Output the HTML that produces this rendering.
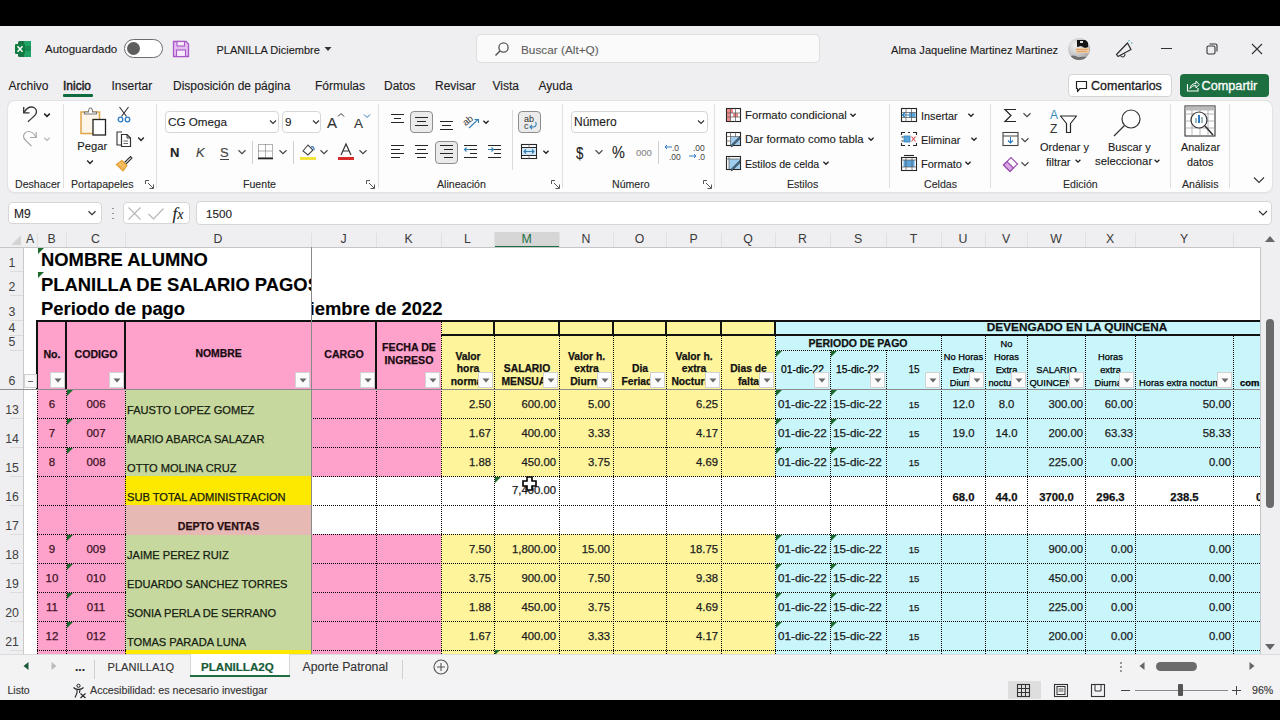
<!DOCTYPE html>
<html><head><meta charset="utf-8"><title>Excel</title>
<style>
html,body{margin:0;padding:0;width:1280px;height:720px;overflow:hidden;background:#efeef1;}
body{position:relative;font-family:"Liberation Sans",sans-serif;}
div,svg{position:absolute;box-sizing:border-box;}
.t{white-space:nowrap;-webkit-text-stroke:0.12px currentColor;}
.g{-webkit-text-stroke:0.25px currentColor;}
svg{overflow:visible;}
</style></head><body>
<div style="left:0px;top:0px;width:1280px;height:720px;background:#efeef1;"></div>
<div style="left:0px;top:0px;width:1280px;height:26px;background:#000;"></div>
<div style="left:0px;top:700px;width:1280px;height:20px;background:#000;"></div>
<svg style="left:14px;top:40px;" width="18" height="18" viewBox="0 0 18 18"><rect x="4" y="1" width="13" height="16" rx="1.5" fill="#1a7343"/><rect x="10" y="1" width="7" height="16" fill="#21a366"/><rect x="4" y="6" width="13" height="5" fill="#107c41" opacity=".6"/><rect x="1" y="4" width="10" height="10" rx="1" fill="#107c41"/><path d="M3.5 6.2 L8.5 11.8 M8.5 6.2 L3.5 11.8" stroke="#fff" stroke-width="1.5"/></svg>
<div class="t " style="left:45px;top:44.27px;font-size:11.5px;line-height:11.5px;color:#1b1b1b;">Autoguardado</div>
<div style="left:124px;top:39px;width:39px;height:19px;background:#fff;border:1.3px solid #6b6b6b;border-radius:10px;box-sizing:border-box;"></div>
<div style="left:127px;top:42px;width:13px;height:13px;background:#5e5e5e;border-radius:50%;"></div>
<svg style="left:172px;top:40px;" width="18" height="18" viewBox="0 0 18 18"><path d="M1.5 1.5 H14 L16.5 4 V16.5 H1.5 Z" fill="#e3bdf0" stroke="#a957c9" stroke-width="1.3"/><rect x="5" y="1.5" width="7.5" height="4.5" fill="#f7ecfb" stroke="#a957c9" stroke-width="1.1"/><rect x="4.5" y="10" width="9" height="6.5" fill="#f7ecfb" stroke="#a957c9" stroke-width="1.1"/></svg>
<div class="t " style="left:216.5px;top:44.69px;font-size:11.0px;line-height:11.0px;color:#1b1b1b;">PLANILLA Diciembre</div>
<svg style="left:324px;top:46px;" width="8" height="6" viewBox="0 0 8 6"><path d="M0.5 1 L4 5 L7.5 1 Z" fill="#333"/></svg>
<div style="left:476px;top:34px;width:344px;height:29px;background:#fafafa;border:1px solid #dedede;border-radius:5px;box-sizing:border-box;"></div>
<svg style="left:494px;top:41px;" width="16" height="16" viewBox="0 0 16 16"><circle cx="9.5" cy="6.5" r="4.6" fill="none" stroke="#555" stroke-width="1.3"/><path d="M6.2 9.8 L1.5 14.5" stroke="#555" stroke-width="1.5"/></svg>
<div class="t " style="left:521px;top:44.51px;font-size:11.8px;line-height:11.8px;color:#5f5f5f;">Buscar (Alt+Q)</div>
<div class="t " style="left:891px;top:44.60px;font-size:11.1px;line-height:11.1px;color:#1b1b1b;">Alma Jaqueline Martinez Martinez</div>
<svg style="left:1067px;top:37px;" width="24" height="24" viewBox="0 0 24 24"><defs><radialGradient id="avg" cx=".35" cy=".35" r=".8"><stop offset="0" stop-color="#f2f2f2"/><stop offset="1" stop-color="#9a9a9a"/></radialGradient><clipPath id="av"><circle cx="12" cy="12" r="11"/></clipPath></defs><g clip-path="url(#av)"><rect width="24" height="24" fill="url(#avg)"/><path d="M10 3 H21 V10 L18 11 L14 9 L10 10 Z" fill="#151515"/><rect x="13" y="4" width="3" height="2" fill="#ddd"/><rect x="9" y="11" width="13" height="5" fill="#f0c9a0"/><path d="M9 12.5 H21 M10 14.5 H20" stroke="#d99a60" stroke-width=".8"/><path d="M4 19 C7 17, 10 21, 14 20 C17 19, 20 21, 22 19 V24 H4 Z" fill="#6f6f6f"/></g></svg>
<svg style="left:1112px;top:38px;" width="22" height="22" viewBox="0 0 22 22"><path d="M4.5 16.5 L15.5 5 L19 11.5 L6 18.5 Z" fill="none" stroke="#2a2a2a" stroke-width="1.2" stroke-linejoin="round"/><path d="M8.5 17 A2.2 2.2 0 1 0 12.5 15.5" fill="none" stroke="#2a2a2a" stroke-width="1.1"/><path d="M16.5 3.5 L17.5 2 M19 5.5 L20.5 4.5" stroke="#5fb3b3" stroke-width="1.1"/></svg>
<div style="left:1161px;top:48px;width:11px;height:1px;background:#333;"></div>
<svg style="left:1205px;top:42px;" width="14" height="14" viewBox="0 0 14 14"><rect x="2" y="4" width="8" height="8" rx="1.5" fill="none" stroke="#333" stroke-width="1.1"/><path d="M4.5 2 H10.5 A1.5 1.5 0 0 1 12 3.5 V9.5" fill="none" stroke="#333" stroke-width="1.1"/></svg>
<svg style="left:1250px;top:42px;" width="14" height="14" viewBox="0 0 14 14"><path d="M2 2 L12 12 M12 2 L2 12" stroke="#333" stroke-width="1.1"/></svg>
<div class="t " style="left:8.5px;top:80.34px;font-size:12px;line-height:12px;color:#1b1b1b;">Archivo</div>
<div class="t " style="left:63px;top:80.34px;font-size:12px;line-height:12px;color:#1b1b1b;-webkit-text-stroke:0.45px #1b1b1b;">Inicio</div>
<div class="t " style="left:111.5px;top:80.34px;font-size:12px;line-height:12px;color:#1b1b1b;">Insertar</div>
<div class="t " style="left:173px;top:80.34px;font-size:12px;line-height:12px;color:#1b1b1b;">Disposición de página</div>
<div class="t " style="left:315px;top:80.34px;font-size:12px;line-height:12px;color:#1b1b1b;">Fórmulas</div>
<div class="t " style="left:384px;top:80.34px;font-size:12px;line-height:12px;color:#1b1b1b;">Datos</div>
<div class="t " style="left:435px;top:80.34px;font-size:12px;line-height:12px;color:#1b1b1b;">Revisar</div>
<div class="t " style="left:492.5px;top:80.34px;font-size:12px;line-height:12px;color:#1b1b1b;">Vista</div>
<div class="t " style="left:538.5px;top:80.34px;font-size:12px;line-height:12px;color:#1b1b1b;">Ayuda</div>
<div style="left:63px;top:94px;width:30px;height:2.5px;background:#0f6b3e;border-radius:1px;"></div>
<div style="left:1068px;top:74px;width:104px;height:23px;background:#fff;border:1px solid #d4d4d4;border-radius:4px;box-sizing:border-box;"></div>
<svg style="left:1075px;top:80px;" width="14" height="14" viewBox="0 0 14 14"><path d="M1.5 1.5 H11.5 V8.5 H5 L2.5 11.5 V8.5 H1.5 Z" fill="none" stroke="#222" stroke-width="1.2" stroke-linejoin="round"/></svg>
<div class="t " style="left:1091px;top:79.72px;font-size:12.5px;line-height:12.5px;color:#1b1b1b;-webkit-text-stroke:0.3px #1b1b1b;">Comentarios</div>
<div style="left:1180px;top:74px;width:89px;height:23px;background:#1d6f42;border-radius:4px;"></div>
<svg style="left:1186px;top:79px;" width="14" height="13" viewBox="0 0 14 13"><path d="M1.5 5 V12 H12 V9" fill="none" stroke="#fff" stroke-width="1.1"/><path d="M4 9.5 C4.5 6 7 4.5 10 4.5 V2 L13.2 5.5 L10 9 V6.5 C7.5 6.5 5.5 7.5 4 9.5 Z" fill="none" stroke="#fff" stroke-width="1"/></svg>
<div class="t " style="left:1201.5px;top:79.55px;font-size:12.7px;line-height:12.7px;color:#fff;-webkit-text-stroke:0.3px #fff;">Compartir</div>
<div style="left:8px;top:101px;width:1264px;height:91px;background:#fdfdfd;border-radius:7px;box-shadow:0 0 0 1px #e3e3e3, 0 1px 2px rgba(0,0,0,.12);"></div>
<div style="left:63px;top:104px;width:1px;height:84px;background:#e0e0e0;"></div>
<div style="left:156px;top:104px;width:1px;height:84px;background:#e0e0e0;"></div>
<div style="left:378px;top:104px;width:1px;height:84px;background:#e0e0e0;"></div>
<div style="left:562px;top:104px;width:1px;height:84px;background:#e0e0e0;"></div>
<div style="left:714px;top:104px;width:1px;height:84px;background:#e0e0e0;"></div>
<div style="left:889px;top:104px;width:1px;height:84px;background:#e0e0e0;"></div>
<div style="left:990px;top:104px;width:1px;height:84px;background:#e0e0e0;"></div>
<div style="left:1170px;top:104px;width:1px;height:84px;background:#e0e0e0;"></div>
<div style="left:1229px;top:104px;width:1px;height:84px;background:#e0e0e0;"></div>
<div class="t " style="left:15px;top:179.03px;font-size:10.6px;line-height:10.6px;color:#2a2a2a;">Deshacer</div>
<div class="t " style="left:71px;top:179.03px;font-size:10.6px;line-height:10.6px;color:#2a2a2a;">Portapapeles</div>
<div class="t " style="left:243px;top:179.03px;font-size:10.6px;line-height:10.6px;color:#2a2a2a;">Fuente</div>
<div class="t " style="left:437px;top:179.03px;font-size:10.6px;line-height:10.6px;color:#2a2a2a;">Alineación</div>
<div class="t " style="left:612px;top:179.03px;font-size:10.6px;line-height:10.6px;color:#2a2a2a;">Número</div>
<div class="t " style="left:787px;top:179.03px;font-size:10.6px;line-height:10.6px;color:#2a2a2a;">Estilos</div>
<div class="t " style="left:924px;top:179.03px;font-size:10.6px;line-height:10.6px;color:#2a2a2a;">Celdas</div>
<div class="t " style="left:1063px;top:179.03px;font-size:10.6px;line-height:10.6px;color:#2a2a2a;">Edición</div>
<div class="t " style="left:1182px;top:179.03px;font-size:10.6px;line-height:10.6px;color:#2a2a2a;">Análisis</div>
<svg style="left:145px;top:180px;" width="9" height="9" viewBox="0 0 9 9"><path d="M0.5 0.5 H4 M0.5 0.5 V4 M8.5 4.5 V8.5 H4.5 M3 3 L8 8" fill="none" stroke="#555" stroke-width="1"/></svg>
<svg style="left:366px;top:180px;" width="9" height="9" viewBox="0 0 9 9"><path d="M0.5 0.5 H4 M0.5 0.5 V4 M8.5 4.5 V8.5 H4.5 M3 3 L8 8" fill="none" stroke="#555" stroke-width="1"/></svg>
<svg style="left:551px;top:180px;" width="9" height="9" viewBox="0 0 9 9"><path d="M0.5 0.5 H4 M0.5 0.5 V4 M8.5 4.5 V8.5 H4.5 M3 3 L8 8" fill="none" stroke="#555" stroke-width="1"/></svg>
<svg style="left:703px;top:180px;" width="9" height="9" viewBox="0 0 9 9"><path d="M0.5 0.5 H4 M0.5 0.5 V4 M8.5 4.5 V8.5 H4.5 M3 3 L8 8" fill="none" stroke="#555" stroke-width="1"/></svg>
<svg style="left:21px;top:105px;" width="18" height="18" viewBox="0 0 18 18"><path d="M2.7 2 V7.8 H8.5" fill="none" stroke="#333" stroke-width="1.3"/><path d="M2.9 7.6 C5 4, 8 2, 10.5 2 C13.5 2, 15.5 4.3, 15.5 7 C15.5 9, 14.5 10.2, 7 16.7" fill="none" stroke="#333" stroke-width="1.3"/></svg>
<svg style="left:42px;top:111px;" width="10" height="8" viewBox="0 0 10 8"><path d="M2.2 2.6 L5 5.4 L7.8 2.6" fill="none" stroke="#222" stroke-width="1.5"/></svg>
<svg style="left:21px;top:130px;" width="18" height="18" viewBox="0 0 18 18"><path d="M15.2 2 V7.5 H9" fill="none" stroke="#a8a8a8" stroke-width="1.2"/><path d="M15 7.3 C13 3.5, 10 1.5, 7.5 1.5 C4.5 1.5, 2.5 4, 2.5 6.5 C2.5 8.5, 3.5 9.8, 10.5 16" fill="none" stroke="#a8a8a8" stroke-width="1.2"/></svg>
<svg style="left:42px;top:135px;" width="10" height="8" viewBox="0 0 10 8"><path d="M2.2 2.6 L5 5.4 L7.8 2.6" fill="none" stroke="#b0b0b0" stroke-width="1.1"/></svg>
<svg style="left:78px;top:105px;" width="30" height="32" viewBox="0 0 30 32"><rect x="3" y="7" width="18.5" height="21.5" fill="#fdf6e8" stroke="#e0a545" stroke-width="1.5"/><path d="M6.5 9 V7 H10.5 C10.5 4.5 11.5 3 12.5 3 C13.5 3 14.5 4.5 14.5 7 H18.5 V9 Z" fill="#fff" stroke="#777" stroke-width="1.1"/><rect x="15" y="14.5" width="12.5" height="15.5" fill="#fff" stroke="#222" stroke-width="1.3"/></svg>
<div class="t " style="left:77.3px;top:141.02px;font-size:11.2px;line-height:11.2px;color:#1b1b1b;">Pegar</div>
<svg style="left:85px;top:157.5px;" width="10" height="8" viewBox="0 0 10 8"><path d="M2.2 2.6 L5 5.4 L7.8 2.6" fill="none" stroke="#222" stroke-width="1.4"/></svg>
<svg style="left:116px;top:106px;" width="16" height="18" viewBox="0 0 16 18"><path d="M3.5 1 L10.5 10.5 M12.5 1 L5.5 10.5" stroke="#333" stroke-width="1.1"/><circle cx="4.5" cy="13.5" r="2.3" fill="none" stroke="#2b7cc4" stroke-width="1.3"/><circle cx="11.5" cy="13.5" r="2.3" fill="none" stroke="#2b7cc4" stroke-width="1.3"/></svg>
<svg style="left:115px;top:130px;" width="18" height="18" viewBox="0 0 18 18"><path d="M7 2 H2 V15 H6" fill="none" stroke="#333" stroke-width="1.1"/><path d="M6.5 4.5 H12 L15.5 8 V16.5 H6.5 Z" fill="#fff" stroke="#333" stroke-width="1.2"/><path d="M12 4.5 V8 H15.5" fill="none" stroke="#333" stroke-width="1"/><path d="M8.5 11 H13 M8.5 13.5 H13" stroke="#555" stroke-width="0.9"/></svg>
<svg style="left:136px;top:135px;" width="10" height="8" viewBox="0 0 10 8"><path d="M2.2 2.6 L5 5.4 L7.8 2.6" fill="none" stroke="#222" stroke-width="1.4"/></svg>
<svg style="left:115px;top:154px;" width="18" height="18" viewBox="0 0 18 18"><path d="M9 9 L15.5 2.5 L17 4 L10.5 10.5" fill="#fff" stroke="#333" stroke-width="1.1"/><path d="M1.5 10.5 L7 6.5 L12 11.5 L8 17 Z" fill="#f7c46c" stroke="#e39a2a" stroke-width="1.1"/><path d="M4 11 L9 15 M6 9 L10.5 13" stroke="#e39a2a" stroke-width=".8"/></svg>
<div style="left:165px;top:111px;width:114px;height:22px;background:#fff;border:1px solid #d6d6d6;border-radius:4px;box-sizing:border-box;"></div>
<div class="t " style="left:168px;top:116.10px;font-size:11.7px;line-height:11.7px;color:#1b1b1b;">CG Omega</div>
<svg style="left:268px;top:118px;" width="10" height="8" viewBox="0 0 10 8"><path d="M2 2.5 L5 5.5 L8 2.5" fill="none" stroke="#333" stroke-width="1.1"/></svg>
<div style="left:282px;top:111px;width:39px;height:22px;background:#fff;border:1px solid #d6d6d6;border-radius:4px;box-sizing:border-box;"></div>
<div class="t " style="left:285px;top:116.10px;font-size:11.7px;line-height:11.7px;color:#1b1b1b;">9</div>
<svg style="left:311px;top:118px;" width="10" height="8" viewBox="0 0 10 8"><path d="M2 2.5 L5 5.5 L8 2.5" fill="none" stroke="#333" stroke-width="1.1"/></svg>
<div class="t " style="left:327px;top:115.30px;font-size:15px;line-height:15px;color:#333;font-weight:normal;">A</div>
<svg style="left:337px;top:112px;" width="8" height="6" viewBox="0 0 8 6"><path d="M1 4.5 L4 1.5 L7 4.5" fill="none" stroke="#333" stroke-width="1"/></svg>
<div class="t " style="left:354px;top:116.57px;font-size:13.5px;line-height:13.5px;color:#333;">A</div>
<svg style="left:363px;top:113px;" width="8" height="6" viewBox="0 0 8 6"><path d="M1 1.5 L4 4.5 L7 1.5" fill="none" stroke="#2b79c2" stroke-width="1"/></svg>
<div class="t " style="left:170px;top:146.00px;font-size:13px;line-height:13px;color:#222;font-weight:bold;">N</div>
<div class="t " style="left:196px;top:146.00px;font-size:13px;line-height:13px;color:#444;font-style:italic;">K</div>
<div class="t " style="left:220px;top:146.00px;font-size:13px;line-height:13px;color:#444;">S</div>
<div style="left:220px;top:159px;width:9px;height:1px;background:#444;"></div>
<svg style="left:237px;top:148px;" width="10" height="8" viewBox="0 0 10 8"><path d="M1.5 2.25 L5 5.75 L8.5 2.25" fill="none" stroke="#444" stroke-width="1.1"/></svg>
<div style="left:252px;top:141px;width:1px;height:23px;background:#d0d0d0;"></div>
<svg style="left:257px;top:143px;" width="17" height="17" viewBox="0 0 17 17"><rect x="1.5" y="1.5" width="14" height="13" fill="none" stroke="#666" stroke-width="1" stroke-dasharray="1 1"/><path d="M8.5 1.5 V14.5 M1.5 8 H15.5" stroke="#666" stroke-width="1" stroke-dasharray="1 1"/><path d="M1 15.5 H16" stroke="#222" stroke-width="1.6"/></svg>
<svg style="left:278px;top:148px;" width="10" height="8" viewBox="0 0 10 8"><path d="M1.5 2.25 L5 5.75 L8.5 2.25" fill="none" stroke="#444" stroke-width="1.1"/></svg>
<div style="left:293px;top:141px;width:1px;height:23px;background:#d0d0d0;"></div>
<svg style="left:299px;top:142px;" width="18" height="20" viewBox="0 0 18 20"><path d="M4 9 L9 3 L14 8 L9 13 Z" fill="#fff" stroke="#444" stroke-width="1.1"/><path d="M12 5 C14 4 15.5 6 15 8" fill="none" stroke="#2b79c2" stroke-width="1.2"/><rect x="1" y="15" width="16" height="3" fill="#f2e33a"/></svg>
<svg style="left:319px;top:148px;" width="10" height="8" viewBox="0 0 10 8"><path d="M1.5 2.25 L5 5.75 L8.5 2.25" fill="none" stroke="#444" stroke-width="1.1"/></svg>
<svg style="left:337px;top:142px;" width="18" height="20" viewBox="0 0 18 20"><path d="M4 13 L9 2 L14 13 M6 9 H12" fill="none" stroke="#333" stroke-width="1.2"/><rect x="1" y="15" width="16" height="3" fill="#d92b2b"/></svg>
<svg style="left:358px;top:148px;" width="10" height="8" viewBox="0 0 10 8"><path d="M1.5 2.25 L5 5.75 L8.5 2.25" fill="none" stroke="#444" stroke-width="1.1"/></svg>
<div style="left:391px;top:114px;width:13px;height:1px;background:#262626;"></div>
<div style="left:394px;top:118px;width:7px;height:1px;background:#262626;"></div>
<div style="left:391px;top:122px;width:13px;height:1px;background:#262626;"></div>
<div style="left:410px;top:111px;width:23px;height:22px;background:#ebebeb;border:1px solid #8e8e8e;border-radius:4px;box-sizing:border-box;"></div>
<div style="left:415px;top:117px;width:13px;height:1px;background:#262626;"></div>
<div style="left:417px;top:121px;width:9px;height:1px;background:#262626;"></div>
<div style="left:415px;top:125px;width:13px;height:1px;background:#262626;"></div>
<div style="left:440px;top:121px;width:13px;height:1px;background:#262626;"></div>
<div style="left:442px;top:125px;width:9px;height:1px;background:#262626;"></div>
<div style="left:440px;top:129px;width:13px;height:1px;background:#262626;"></div>
<svg style="left:461px;top:111px;" width="22" height="20" viewBox="0 0 22 20"><text x="1" y="13" font-size="9.5" font-family="Liberation Sans" fill="#333" transform="rotate(-40 6 9)">ab</text><path d="M8 17 L17 8.5" stroke="#2f7fb6" stroke-width="1.1"/><path d="M13.5 8.5 H17.5 V12" fill="none" stroke="#2f7fb6" stroke-width="1.1"/></svg>
<svg style="left:481px;top:118px;" width="10" height="8" viewBox="0 0 10 8"><path d="M2.4 2.7 L5 5.3 L7.6 2.7" fill="none" stroke="#222" stroke-width="1.3"/></svg>
<div style="left:512px;top:110px;width:1px;height:60px;background:#dcdcdc;"></div>
<div style="left:518px;top:111px;width:23px;height:22px;background:#ebebeb;border:1px solid #8e8e8e;border-radius:4px;box-sizing:border-box;"></div>
<svg style="left:519px;top:112px;" width="21" height="20" viewBox="0 0 21 20"><text x="5" y="9.5" font-size="9" font-family="Liberation Sans" fill="#333">ab</text><text x="5" y="17" font-size="9" font-family="Liberation Sans" fill="#333">c</text><path d="M16.5 10 C18 12, 17 15, 14.5 15 H11 M13 13 L11 15 L13 17" fill="none" stroke="#2f7fb6" stroke-width="1.1"/></svg>
<div style="left:391px;top:145px;width:13px;height:1px;background:#262626;"></div>
<div style="left:391px;top:149px;width:9px;height:1px;background:#262626;"></div>
<div style="left:391px;top:153px;width:13px;height:1px;background:#262626;"></div>
<div style="left:391px;top:157px;width:9px;height:1px;background:#262626;"></div>
<div style="left:415px;top:145px;width:13px;height:1px;background:#262626;"></div>
<div style="left:417px;top:149px;width:9px;height:1px;background:#262626;"></div>
<div style="left:415px;top:153px;width:13px;height:1px;background:#262626;"></div>
<div style="left:417px;top:157px;width:9px;height:1px;background:#262626;"></div>
<div style="left:435px;top:141px;width:23px;height:23px;background:#ebebeb;border:1px solid #8e8e8e;border-radius:4px;box-sizing:border-box;"></div>
<div style="left:440px;top:145px;width:13px;height:1px;background:#262626;"></div>
<div style="left:444px;top:149px;width:9px;height:1px;background:#262626;"></div>
<div style="left:440px;top:153px;width:13px;height:1px;background:#262626;"></div>
<div style="left:444px;top:157px;width:9px;height:1px;background:#262626;"></div>
<div style="left:464px;top:145px;width:13px;height:1px;background:#262626;"></div>
<div style="left:470px;top:149px;width:7px;height:1px;background:#262626;"></div>
<div style="left:470px;top:153px;width:7px;height:1px;background:#262626;"></div>
<div style="left:464px;top:157px;width:13px;height:1px;background:#262626;"></div>
<svg style="left:463px;top:146px;" width="8" height="8" viewBox="0 0 8 8"><path d="M7 3.5 H1.5 M3.5 1.5 L1.5 3.5 L3.5 5.5" fill="none" stroke="#2f7fb6" stroke-width="1.1"/></svg>
<div style="left:488px;top:145px;width:13px;height:1px;background:#262626;"></div>
<div style="left:494px;top:149px;width:7px;height:1px;background:#262626;"></div>
<div style="left:494px;top:153px;width:7px;height:1px;background:#262626;"></div>
<div style="left:488px;top:157px;width:13px;height:1px;background:#262626;"></div>
<svg style="left:487px;top:146px;" width="8" height="8" viewBox="0 0 8 8"><path d="M1 3.5 H6.5 M4.5 1.5 L6.5 3.5 L4.5 5.5" fill="none" stroke="#2f7fb6" stroke-width="1.1"/></svg>
<svg style="left:520px;top:143px;" width="19" height="17" viewBox="0 0 19 17"><rect x="1.5" y="1.5" width="15" height="14" fill="#fff" stroke="#262626" stroke-width="1.1"/><rect x="2" y="4.5" width="14" height="8" fill="#d4e8f7"/><path d="M1.5 4.5 H16.5 M1.5 12.5 H16.5" stroke="#262626" stroke-width="1"/><path d="M9 1.5 V4.5 M9 12.5 V15.5" stroke="#777" stroke-width=".8"/><path d="M4 8.5 H14 M6 6.5 L4 8.5 L6 10.5 M12 6.5 L14 8.5 L12 10.5" fill="none" stroke="#2f7fb6" stroke-width="1.1"/></svg>
<svg style="left:541px;top:148px;" width="10" height="8" viewBox="0 0 10 8"><path d="M2.4 2.7 L5 5.3 L7.6 2.7" fill="none" stroke="#222" stroke-width="1.3"/></svg>
<div style="left:571px;top:111px;width:137px;height:22px;background:#fff;border:1px solid #d6d6d6;border-radius:4px;box-sizing:border-box;"></div>
<div class="t " style="left:574px;top:115.84px;font-size:12px;line-height:12px;color:#1b1b1b;">Número</div>
<svg style="left:696px;top:118px;" width="10" height="8" viewBox="0 0 10 8"><path d="M2 2.5 L5 5.5 L8 2.5" fill="none" stroke="#333" stroke-width="1.1"/></svg>
<div class="t " style="left:576px;top:144.61px;font-size:17px;line-height:17px;color:#222;transform:scaleX(.78);transform-origin:0 0;">$</div>
<svg style="left:594px;top:148px;" width="10" height="8" viewBox="0 0 10 8"><path d="M1.5 2.25 L5 5.75 L8.5 2.25" fill="none" stroke="#444" stroke-width="1.1"/></svg>
<div class="t " style="left:612px;top:144.11px;font-size:17px;line-height:17px;color:#222;transform:scaleX(.85);transform-origin:0 0;">%</div>
<div class="t " style="left:636px;top:147.96px;font-size:9.5px;line-height:9.5px;color:#888;">000</div>
<div style="left:658px;top:141px;width:1px;height:23px;background:#d0d0d0;"></div>
<svg style="left:663px;top:142px;" width="20" height="20" viewBox="0 0 20 20"><text x="9" y="8.5" font-size="8.5" font-family="Liberation Sans" fill="#444">.0</text><text x="6" y="17.5" font-size="8.5" font-family="Liberation Sans" fill="#444">.00</text><path d="M9 5 H2 M4 3 L2 5 L4 7" fill="none" stroke="#2b79c2" stroke-width="1"/></svg>
<svg style="left:687px;top:142px;" width="20" height="20" viewBox="0 0 20 20"><text x="6" y="8.5" font-size="8.5" font-family="Liberation Sans" fill="#444">.00</text><text x="11" y="17.5" font-size="8.5" font-family="Liberation Sans" fill="#444">.0</text><path d="M2 14 H9 M7 12 L9 14 L7 16" fill="none" stroke="#2b79c2" stroke-width="1"/></svg>
<svg style="left:725px;top:107px;" width="17" height="16" viewBox="0 0 17 16"><rect x="1.5" y="1.5" width="14" height="13" fill="#fff" stroke="#262626" stroke-width="1.1"/><rect x="2" y="2" width="6" height="4" fill="#f08a8a"/><rect x="2" y="6" width="3.5" height="8" fill="#f08a8a"/><rect x="8" y="6" width="5" height="4" fill="#f08a8a"/><path d="M1.5 6 H15.5 M1.5 10 H15.5 M5.5 1.5 V14.5 M10.5 1.5 V14.5" stroke="#555" stroke-width=".7"/></svg>
<div class="t " style="left:745px;top:110.43px;font-size:11.3px;line-height:11.3px;color:#1b1b1b;">Formato condicional</div>
<svg style="left:848px;top:111px;" width="10" height="8" viewBox="0 0 10 8"><path d="M2.4 2.7 L5 5.3 L7.6 2.7" fill="none" stroke="#222" stroke-width="1.3"/></svg>
<svg style="left:725px;top:131px;" width="17" height="17" viewBox="0 0 17 17"><rect x="1.5" y="1.5" width="14" height="13" fill="#fff" stroke="#262626" stroke-width="1.1"/><path d="M1.5 5.5 H15.5 M1.5 10 H15.5 M5.5 1.5 V14.5 M10.5 1.5 V14.5" stroke="#555" stroke-width=".7"/><rect x="6" y="6" width="9" height="8" fill="#9fcdef"/><path d="M6 15.5 L15.5 6" stroke="#262626" stroke-width="2.2"/><path d="M6.5 15 L15 6.5" stroke="#5aa5dc" stroke-width="1"/></svg>
<div class="t " style="left:745px;top:134.39px;font-size:11.35px;line-height:11.35px;color:#1b1b1b;">Dar formato como tabla</div>
<svg style="left:866px;top:135px;" width="10" height="8" viewBox="0 0 10 8"><path d="M2.4 2.7 L5 5.3 L7.6 2.7" fill="none" stroke="#222" stroke-width="1.3"/></svg>
<svg style="left:725px;top:155px;" width="17" height="17" viewBox="0 0 17 17"><rect x="1.5" y="1.5" width="14" height="13" fill="#fff" stroke="#262626" stroke-width="1.1"/><rect x="4" y="4" width="11" height="10" fill="#9fcdef"/><path d="M1.5 4 H15.5 M4 1.5 V14.5" stroke="#555" stroke-width=".7"/><path d="M6 15.5 L15.5 6" stroke="#262626" stroke-width="2.2"/><path d="M6.5 15 L15 6.5" stroke="#5aa5dc" stroke-width="1"/></svg>
<div class="t " style="left:745px;top:159.03px;font-size:10.6px;line-height:10.6px;color:#1b1b1b;">Estilos de celda</div>
<svg style="left:821px;top:159px;" width="10" height="8" viewBox="0 0 10 8"><path d="M2.4 2.7 L5 5.3 L7.6 2.7" fill="none" stroke="#222" stroke-width="1.3"/></svg>
<svg style="left:900px;top:107px;" width="18" height="16" viewBox="0 0 18 16"><rect x="1.5" y="1.5" width="15" height="13" fill="#fff" stroke="#262626" stroke-width="1.1"/><rect x="9" y="5.5" width="6.5" height="5" fill="#5aa5dc"/><path d="M1.5 5.5 H16.5 M1.5 10.5 H16.5 M6 1.5 V14.5 M11.5 1.5 V14.5" stroke="#555" stroke-width=".7"/><path d="M9 8 H2.5 M5 5.5 L2.5 8 L5 10.5" fill="none" stroke="#2f7fb6" stroke-width="1.2"/></svg>
<div class="t " style="left:921px;top:110.86px;font-size:10.8px;line-height:10.8px;color:#1b1b1b;">Insertar</div>
<svg style="left:966px;top:111px;" width="10" height="8" viewBox="0 0 10 8"><path d="M2.4 2.7 L5 5.3 L7.6 2.7" fill="none" stroke="#222" stroke-width="1.3"/></svg>
<svg style="left:900px;top:131px;" width="18" height="16" viewBox="0 0 18 16"><path d="M1.5 4 V1.5 H5 M8 1.5 H10 M13 1.5 H16.5 V4 M16.5 12 V14.5 H13 M10 14.5 H8 M5 14.5 H1.5 V12" fill="none" stroke="#262626" stroke-width="1.1"/><path d="M1.5 6 H3.5 M1.5 10 H3.5" stroke="#262626" stroke-width="1"/><rect x="4" y="5" width="6" height="6" fill="#5aa5dc" stroke="#2f7fb6" stroke-width=".8"/><path d="M11.5 5.5 L15.5 10.5 M15.5 5.5 L11.5 10.5" stroke="#d9534f" stroke-width="1.1"/></svg>
<div class="t " style="left:921px;top:134.77px;font-size:10.9px;line-height:10.9px;color:#1b1b1b;">Eliminar</div>
<svg style="left:969px;top:135px;" width="10" height="8" viewBox="0 0 10 8"><path d="M2.4 2.7 L5 5.3 L7.6 2.7" fill="none" stroke="#222" stroke-width="1.3"/></svg>
<svg style="left:900px;top:154px;" width="18" height="18" viewBox="0 0 18 18"><path d="M4 1.5 H14" stroke="#262626" stroke-width="1.1"/><rect x="1.5" y="3.5" width="15" height="13" fill="#fff" stroke="#262626" stroke-width="1.1"/><rect x="3.5" y="6" width="11" height="7" fill="#5aa5dc"/><path d="M1.5 6 H16.5 M1.5 13 H16.5 M6 3.5 V16.5 M12 3.5 V16.5" stroke="#555" stroke-width=".7"/></svg>
<div class="t " style="left:921px;top:158.69px;font-size:11px;line-height:11px;color:#1b1b1b;">Formato</div>
<svg style="left:963px;top:159px;" width="10" height="8" viewBox="0 0 10 8"><path d="M2.4 2.7 L5 5.3 L7.6 2.7" fill="none" stroke="#222" stroke-width="1.3"/></svg>
<svg style="left:1003px;top:107px;" width="15" height="16" viewBox="0 0 15 16"><path d="M13 2.5 H2 L8 8.5 L2 14.5 H13" fill="none" stroke="#262626" stroke-width="1.2"/></svg>
<svg style="left:1022px;top:111px;" width="10" height="8" viewBox="0 0 10 8"><path d="M1.5 2.25 L5 5.75 L8.5 2.25" fill="none" stroke="#444" stroke-width="1.1"/></svg>
<svg style="left:1002px;top:131px;" width="18" height="17" viewBox="0 0 18 17"><rect x="1" y="1.5" width="15" height="13" fill="#fff" stroke="#444" stroke-width="1.1"/><path d="M1 5 H16" stroke="#444" stroke-width="1"/><path d="M8.5 6 V12 M6 9.5 L8.5 12 L11 9.5" fill="none" stroke="#2b79c2" stroke-width="1.1"/></svg>
<svg style="left:1020px;top:136px;" width="10" height="8" viewBox="0 0 10 8"><path d="M1.5 2.25 L5 5.75 L8.5 2.25" fill="none" stroke="#444" stroke-width="1.1"/></svg>
<svg style="left:1002px;top:155px;" width="18" height="17" viewBox="0 0 18 17"><path d="M1.5 10 L9 2.5 L15.5 9 L8 16.5 Z" fill="#fff" stroke="#9b4fae" stroke-width="1.2"/><path d="M1.5 10 L5 6.5 L11.5 13 L8 16.5 Z" fill="#d9a6e6" stroke="#9b4fae" stroke-width="1.2"/></svg>
<svg style="left:1020px;top:160px;" width="10" height="8" viewBox="0 0 10 8"><path d="M1.5 2.25 L5 5.75 L8.5 2.25" fill="none" stroke="#444" stroke-width="1.1"/></svg>
<svg style="left:1047px;top:107px;" width="34" height="30" viewBox="0 0 34 30"><text x="3" y="12" font-size="12" font-family="Liberation Sans" fill="#3a8cb8">A</text><text x="3" y="26" font-size="12" font-family="Liberation Sans" fill="#333">Z</text><path d="M13.5 9 H29.5 L23.5 16.5 V25.5 H19.5 V16.5 Z" fill="none" stroke="#262626" stroke-width="1.2" stroke-linejoin="round"/></svg>
<div class="t " style="left:1040px;top:141.69px;font-size:11px;line-height:11px;color:#1b1b1b;">Ordenar y</div>
<div class="t " style="left:1046px;top:156.69px;font-size:11px;line-height:11px;color:#1b1b1b;">filtrar</div>
<svg style="left:1073px;top:157px;" width="10" height="8" viewBox="0 0 10 8"><path d="M2.6 2.8 L5 5.2 L7.4 2.8" fill="none" stroke="#222" stroke-width="1.3"/></svg>
<svg style="left:1110px;top:107px;" width="36" height="32" viewBox="0 0 36 32"><circle cx="21" cy="12" r="9" fill="none" stroke="#333" stroke-width="1.2"/><path d="M14.5 18.5 L4 29" stroke="#333" stroke-width="1.3"/></svg>
<div class="t " style="left:1108px;top:141.69px;font-size:11px;line-height:11px;color:#1b1b1b;">Buscar y</div>
<div class="t " style="left:1095px;top:156.43px;font-size:11.3px;line-height:11.3px;color:#1b1b1b;">seleccionar</div>
<svg style="left:1152px;top:157px;" width="10" height="8" viewBox="0 0 10 8"><path d="M2.6 2.8 L5 5.2 L7.4 2.8" fill="none" stroke="#222" stroke-width="1.3"/></svg>
<svg style="left:1184px;top:105px;" width="32" height="33" viewBox="0 0 32 33"><rect x="1" y="1" width="30" height="30" fill="#fff" stroke="#333" stroke-width="1.1"/><rect x="1.5" y="1.5" width="29" height="4" fill="#bbb"/><path d="M1 9 H31 M1 16 H31 M1 23 H31 M8 5 V31 M16 5 V31 M24 5 V31" stroke="#999" stroke-width=".7"/><circle cx="15" cy="15" r="8" fill="#fff" stroke="#333" stroke-width="1.2"/><rect x="11" y="13" width="2" height="5" fill="#9bb"/><rect x="14" y="10" width="2" height="8" fill="#2b79c2"/><rect x="17" y="12" width="2" height="6" fill="#9bb"/><path d="M21 21 L29 30" stroke="#333" stroke-width="1.6"/></svg>
<div class="t " style="left:1181px;top:141.86px;font-size:10.8px;line-height:10.8px;color:#1b1b1b;">Analizar</div>
<div class="t " style="left:1187px;top:156.86px;font-size:10.8px;line-height:10.8px;color:#1b1b1b;">datos</div>
<svg style="left:1253px;top:176px;" width="12" height="8" viewBox="0 0 12 8"><path d="M1 1.5 L6 6.5 L11 1.5" fill="none" stroke="#333" stroke-width="1.1"/></svg>
<div style="left:8px;top:202px;width:94px;height:22px;background:#fff;border:1px solid #d6d6d6;border-radius:4px;box-sizing:border-box;"></div>
<div class="t " style="left:14px;top:207.84px;font-size:12px;line-height:12px;color:#1b1b1b;">M9</div>
<svg style="left:87px;top:209px;" width="10" height="8" viewBox="0 0 10 8"><path d="M1.5 2.25 L5 5.75 L8.5 2.25" fill="none" stroke="#333" stroke-width="1.2"/></svg>
<div style="left:112px;top:207.5px;width:1.6px;height:1.6px;background:#888;border-radius:1px;"></div>
<div style="left:112px;top:212.5px;width:1.6px;height:1.6px;background:#888;border-radius:1px;"></div>
<div style="left:112px;top:217.5px;width:1.6px;height:1.6px;background:#888;border-radius:1px;"></div>
<div style="left:123px;top:202px;width:67px;height:22px;background:#fff;border:1px solid #d6d6d6;border-radius:4px;box-sizing:border-box;"></div>
<svg style="left:127px;top:206px;" width="15" height="15" viewBox="0 0 15 15"><path d="M1.5 1.5 L13.5 13.5 M13.5 1.5 L1.5 13.5" stroke="#b5b5b5" stroke-width="1.1"/></svg>
<svg style="left:147px;top:206px;" width="18" height="15" viewBox="0 0 18 15"><path d="M1.5 8 L6.5 13 L16.5 2.5" fill="none" stroke="#b5b5b5" stroke-width="1.1"/></svg>
<div class="t " style="left:172.5px;top:205.11px;font-size:17px;line-height:17px;color:#222;font-family:Liberation Serif,serif;"><i>f</i><span style="font-size:14px"><i>x</i></span></div>
<div style="left:196px;top:201px;width:1076px;height:24px;background:#fff;border:1px solid #d6d6d6;border-radius:4px;box-sizing:border-box;"></div>
<div class="t " style="left:206px;top:208.10px;font-size:11.7px;line-height:11.7px;color:#1b1b1b;">1500</div>
<svg style="left:1258px;top:209px;" width="10" height="8" viewBox="0 0 10 8"><path d="M1 2.0 L5 6.0 L9 2.0" fill="none" stroke="#333" stroke-width="1.2"/></svg>
<div style="left:0px;top:227px;width:1280px;height:21px;background:#efeef0;"></div>
<div style="left:0px;top:247px;width:23px;height:407px;background:#efeef0;"></div>
<div style="left:23px;top:247px;width:1237px;height:407px;background:#ffffff;"></div>
<div style="left:494px;top:232px;width:65px;height:15px;background:#d6d6d6;"></div>
<div style="left:494px;top:246px;width:65px;height:2px;background:#1e6e43;"></div>
<div class="t " style="left:23px;top:233.19px;font-size:12.3px;line-height:12.3px;color:#3a3a3a;width:14px;text-align:center;-webkit-text-stroke:0;">A</div>
<div style="left:37px;top:233px;width:1px;height:14px;background:#e0e0e0;"></div>
<div class="t " style="left:37px;top:233.19px;font-size:12.3px;line-height:12.3px;color:#3a3a3a;width:29px;text-align:center;-webkit-text-stroke:0;">B</div>
<div style="left:66px;top:233px;width:1px;height:14px;background:#e0e0e0;"></div>
<div class="t " style="left:66px;top:233.19px;font-size:12.3px;line-height:12.3px;color:#3a3a3a;width:59px;text-align:center;-webkit-text-stroke:0;">C</div>
<div style="left:125px;top:233px;width:1px;height:14px;background:#e0e0e0;"></div>
<div class="t " style="left:125px;top:233.19px;font-size:12.3px;line-height:12.3px;color:#3a3a3a;width:186px;text-align:center;-webkit-text-stroke:0;">D</div>
<div style="left:311px;top:233px;width:1px;height:14px;background:#e0e0e0;"></div>
<div class="t " style="left:311px;top:233.19px;font-size:12.3px;line-height:12.3px;color:#3a3a3a;width:65px;text-align:center;-webkit-text-stroke:0;">J</div>
<div style="left:376px;top:233px;width:1px;height:14px;background:#e0e0e0;"></div>
<div class="t " style="left:376px;top:233.19px;font-size:12.3px;line-height:12.3px;color:#3a3a3a;width:65px;text-align:center;-webkit-text-stroke:0;">K</div>
<div style="left:441px;top:233px;width:1px;height:14px;background:#e0e0e0;"></div>
<div class="t " style="left:441px;top:233.19px;font-size:12.3px;line-height:12.3px;color:#3a3a3a;width:53px;text-align:center;-webkit-text-stroke:0;">L</div>
<div style="left:494px;top:233px;width:1px;height:14px;background:#e0e0e0;"></div>
<div class="t " style="left:494px;top:233.19px;font-size:12.3px;line-height:12.3px;color:#1e6e43;width:65px;text-align:center;-webkit-text-stroke:0;">M</div>
<div style="left:559px;top:233px;width:1px;height:14px;background:#e0e0e0;"></div>
<div class="t " style="left:559px;top:233.19px;font-size:12.3px;line-height:12.3px;color:#3a3a3a;width:54px;text-align:center;-webkit-text-stroke:0;">N</div>
<div style="left:613px;top:233px;width:1px;height:14px;background:#e0e0e0;"></div>
<div class="t " style="left:613px;top:233.19px;font-size:12.3px;line-height:12.3px;color:#3a3a3a;width:53px;text-align:center;-webkit-text-stroke:0;">O</div>
<div style="left:666px;top:233px;width:1px;height:14px;background:#e0e0e0;"></div>
<div class="t " style="left:666px;top:233.19px;font-size:12.3px;line-height:12.3px;color:#3a3a3a;width:55px;text-align:center;-webkit-text-stroke:0;">P</div>
<div style="left:721px;top:233px;width:1px;height:14px;background:#e0e0e0;"></div>
<div class="t " style="left:721px;top:233.19px;font-size:12.3px;line-height:12.3px;color:#3a3a3a;width:54px;text-align:center;-webkit-text-stroke:0;">Q</div>
<div style="left:775px;top:233px;width:1px;height:14px;background:#e0e0e0;"></div>
<div class="t " style="left:775px;top:233.19px;font-size:12.3px;line-height:12.3px;color:#3a3a3a;width:55px;text-align:center;-webkit-text-stroke:0;">R</div>
<div style="left:830px;top:233px;width:1px;height:14px;background:#e0e0e0;"></div>
<div class="t " style="left:830px;top:233.19px;font-size:12.3px;line-height:12.3px;color:#3a3a3a;width:56px;text-align:center;-webkit-text-stroke:0;">S</div>
<div style="left:886px;top:233px;width:1px;height:14px;background:#e0e0e0;"></div>
<div class="t " style="left:886px;top:233.19px;font-size:12.3px;line-height:12.3px;color:#3a3a3a;width:55px;text-align:center;-webkit-text-stroke:0;">T</div>
<div style="left:941px;top:233px;width:1px;height:14px;background:#e0e0e0;"></div>
<div class="t " style="left:941px;top:233.19px;font-size:12.3px;line-height:12.3px;color:#3a3a3a;width:44px;text-align:center;-webkit-text-stroke:0;">U</div>
<div style="left:985px;top:233px;width:1px;height:14px;background:#e0e0e0;"></div>
<div class="t " style="left:985px;top:233.19px;font-size:12.3px;line-height:12.3px;color:#3a3a3a;width:42px;text-align:center;-webkit-text-stroke:0;">V</div>
<div style="left:1027px;top:233px;width:1px;height:14px;background:#e0e0e0;"></div>
<div class="t " style="left:1027px;top:233.19px;font-size:12.3px;line-height:12.3px;color:#3a3a3a;width:58px;text-align:center;-webkit-text-stroke:0;">W</div>
<div style="left:1085px;top:233px;width:1px;height:14px;background:#e0e0e0;"></div>
<div class="t " style="left:1085px;top:233.19px;font-size:12.3px;line-height:12.3px;color:#3a3a3a;width:50px;text-align:center;-webkit-text-stroke:0;">X</div>
<div style="left:1135px;top:233px;width:1px;height:14px;background:#e0e0e0;"></div>
<div class="t " style="left:1135px;top:233.19px;font-size:12.3px;line-height:12.3px;color:#3a3a3a;width:98px;text-align:center;-webkit-text-stroke:0;">Y</div>
<div style="left:1233px;top:233px;width:1px;height:14px;background:#e0e0e0;"></div>
<div style="left:1260px;top:233px;width:1px;height:14px;background:#e0e0e0;"></div>
<div style="left:0px;top:247px;width:1260px;height:1px;background:#c6c6c6;"></div>
<svg style="left:10px;top:234px;" width="12" height="12" viewBox="0 0 12 12"><path d="M11 1 V11 H1 Z" fill="#d4d4d4"/></svg>
<div style="left:23px;top:247px;width:1px;height:407px;background:#c9c9c9;"></div>
<div style="left:10px;top:271px;width:13px;height:1px;background:#dcdcdc;"></div>
<div class="t " style="left:1px;top:257.09px;font-size:12.3px;line-height:12.3px;color:#404040;width:22px;text-align:center;-webkit-text-stroke:0;">1</div>
<div style="left:10px;top:295px;width:13px;height:1px;background:#dcdcdc;"></div>
<div class="t " style="left:1px;top:281.09px;font-size:12.3px;line-height:12.3px;color:#404040;width:22px;text-align:center;-webkit-text-stroke:0;">2</div>
<div style="left:10px;top:320px;width:13px;height:1px;background:#dcdcdc;"></div>
<div class="t " style="left:1px;top:306.09px;font-size:12.3px;line-height:12.3px;color:#404040;width:22px;text-align:center;-webkit-text-stroke:0;">3</div>
<div style="left:10px;top:335px;width:13px;height:1px;background:#dcdcdc;"></div>
<div class="t " style="left:1px;top:322.09px;font-size:12.3px;line-height:12.3px;color:#404040;width:22px;text-align:center;-webkit-text-stroke:0;">4</div>
<div style="left:10px;top:350px;width:13px;height:1px;background:#dcdcdc;"></div>
<div class="t " style="left:1px;top:336.09px;font-size:12.3px;line-height:12.3px;color:#404040;width:22px;text-align:center;-webkit-text-stroke:0;">5</div>
<div style="left:10px;top:389px;width:13px;height:1px;background:#dcdcdc;"></div>
<div class="t " style="left:1px;top:375.09px;font-size:12.3px;line-height:12.3px;color:#404040;width:22px;text-align:center;-webkit-text-stroke:0;">6</div>
<div style="left:10px;top:418px;width:13px;height:1px;background:#dcdcdc;"></div>
<div class="t " style="left:1px;top:404.09px;font-size:12.3px;line-height:12.3px;color:#404040;width:22px;text-align:center;-webkit-text-stroke:0;">13</div>
<div style="left:10px;top:447px;width:13px;height:1px;background:#dcdcdc;"></div>
<div class="t " style="left:1px;top:433.09px;font-size:12.3px;line-height:12.3px;color:#404040;width:22px;text-align:center;-webkit-text-stroke:0;">14</div>
<div style="left:10px;top:476px;width:13px;height:1px;background:#dcdcdc;"></div>
<div class="t " style="left:1px;top:462.09px;font-size:12.3px;line-height:12.3px;color:#404040;width:22px;text-align:center;-webkit-text-stroke:0;">15</div>
<div style="left:10px;top:505px;width:13px;height:1px;background:#dcdcdc;"></div>
<div class="t " style="left:1px;top:491.09px;font-size:12.3px;line-height:12.3px;color:#404040;width:22px;text-align:center;-webkit-text-stroke:0;">16</div>
<div style="left:10px;top:534px;width:13px;height:1px;background:#dcdcdc;"></div>
<div class="t " style="left:1px;top:520.09px;font-size:12.3px;line-height:12.3px;color:#404040;width:22px;text-align:center;-webkit-text-stroke:0;">17</div>
<div style="left:10px;top:563px;width:13px;height:1px;background:#dcdcdc;"></div>
<div class="t " style="left:1px;top:549.09px;font-size:12.3px;line-height:12.3px;color:#404040;width:22px;text-align:center;-webkit-text-stroke:0;">18</div>
<div style="left:10px;top:592px;width:13px;height:1px;background:#dcdcdc;"></div>
<div class="t " style="left:1px;top:578.09px;font-size:12.3px;line-height:12.3px;color:#404040;width:22px;text-align:center;-webkit-text-stroke:0;">19</div>
<div style="left:10px;top:621px;width:13px;height:1px;background:#dcdcdc;"></div>
<div class="t " style="left:1px;top:607.09px;font-size:12.3px;line-height:12.3px;color:#404040;width:22px;text-align:center;-webkit-text-stroke:0;">20</div>
<div style="left:10px;top:650px;width:13px;height:1px;background:#dcdcdc;"></div>
<div class="t " style="left:1px;top:636.09px;font-size:12.3px;line-height:12.3px;color:#404040;width:22px;text-align:center;-webkit-text-stroke:0;">21</div>
<div style="left:10px;top:654px;width:13px;height:1px;background:#dcdcdc;"></div>
<div style="left:37px;top:320px;width:405px;height:70px;background:#fea2cb;"></div>
<div style="left:441px;top:320px;width:335px;height:70px;background:#fdf49c;"></div>
<div style="left:775px;top:320px;width:486px;height:70px;background:#c8f6fb;"></div>
<div style="left:37px;top:389px;width:89px;height:30px;background:#fea2cb;"></div>
<div style="left:125px;top:389px;width:187px;height:30px;background:#c6d89e;"></div>
<div style="left:311px;top:389px;width:131px;height:30px;background:#fea2cb;"></div>
<div style="left:441px;top:389px;width:335px;height:30px;background:#fdf49c;"></div>
<div style="left:775px;top:389px;width:486px;height:30px;background:#c8f6fb;"></div>
<div style="left:37px;top:418px;width:89px;height:30px;background:#fea2cb;"></div>
<div style="left:125px;top:418px;width:187px;height:30px;background:#c6d89e;"></div>
<div style="left:311px;top:418px;width:131px;height:30px;background:#fea2cb;"></div>
<div style="left:441px;top:418px;width:335px;height:30px;background:#fdf49c;"></div>
<div style="left:775px;top:418px;width:486px;height:30px;background:#c8f6fb;"></div>
<div style="left:37px;top:447px;width:89px;height:30px;background:#fea2cb;"></div>
<div style="left:125px;top:447px;width:187px;height:30px;background:#c6d89e;"></div>
<div style="left:311px;top:447px;width:131px;height:30px;background:#fea2cb;"></div>
<div style="left:441px;top:447px;width:335px;height:30px;background:#fdf49c;"></div>
<div style="left:775px;top:447px;width:486px;height:30px;background:#c8f6fb;"></div>
<div style="left:37px;top:534px;width:89px;height:30px;background:#fea2cb;"></div>
<div style="left:125px;top:534px;width:187px;height:30px;background:#c6d89e;"></div>
<div style="left:311px;top:534px;width:131px;height:30px;background:#fea2cb;"></div>
<div style="left:441px;top:534px;width:335px;height:30px;background:#fdf49c;"></div>
<div style="left:775px;top:534px;width:486px;height:30px;background:#c8f6fb;"></div>
<div style="left:37px;top:563px;width:89px;height:30px;background:#fea2cb;"></div>
<div style="left:125px;top:563px;width:187px;height:30px;background:#c6d89e;"></div>
<div style="left:311px;top:563px;width:131px;height:30px;background:#fea2cb;"></div>
<div style="left:441px;top:563px;width:335px;height:30px;background:#fdf49c;"></div>
<div style="left:775px;top:563px;width:486px;height:30px;background:#c8f6fb;"></div>
<div style="left:37px;top:592px;width:89px;height:30px;background:#fea2cb;"></div>
<div style="left:125px;top:592px;width:187px;height:30px;background:#c6d89e;"></div>
<div style="left:311px;top:592px;width:131px;height:30px;background:#fea2cb;"></div>
<div style="left:441px;top:592px;width:335px;height:30px;background:#fdf49c;"></div>
<div style="left:775px;top:592px;width:486px;height:30px;background:#c8f6fb;"></div>
<div style="left:37px;top:621px;width:89px;height:30px;background:#fea2cb;"></div>
<div style="left:125px;top:621px;width:187px;height:30px;background:#c6d89e;"></div>
<div style="left:311px;top:621px;width:131px;height:30px;background:#fea2cb;"></div>
<div style="left:441px;top:621px;width:335px;height:30px;background:#fdf49c;"></div>
<div style="left:775px;top:621px;width:486px;height:30px;background:#c8f6fb;"></div>
<div style="left:37px;top:650px;width:89px;height:5px;background:#fea2cb;"></div>
<div style="left:125px;top:650px;width:187px;height:5px;background:#fde800;"></div>
<div style="left:311px;top:650px;width:131px;height:5px;background:#fea2cb;"></div>
<div style="left:441px;top:650px;width:335px;height:5px;background:#fdf49c;"></div>
<div style="left:775px;top:650px;width:486px;height:5px;background:#c8f6fb;"></div>
<div style="left:37px;top:476px;width:89px;height:30px;background:#fea2cb;"></div>
<div style="left:37px;top:505px;width:89px;height:30px;background:#fea2cb;"></div>
<div style="left:125px;top:476px;width:187px;height:30px;background:#fde800;"></div>
<div style="left:125px;top:505px;width:187px;height:30px;background:#e7b9b5;"></div>
<div style="left:37px;top:418px;width:89px;height:1px;background:repeating-linear-gradient(90deg,#000 0 1px,transparent 1px 2px);"></div>
<div style="left:311px;top:418px;width:950px;height:1px;background:repeating-linear-gradient(90deg,#000 0 1px,transparent 1px 2px);"></div>
<div style="left:37px;top:447px;width:89px;height:1px;background:repeating-linear-gradient(90deg,#000 0 1px,transparent 1px 2px);"></div>
<div style="left:311px;top:447px;width:950px;height:1px;background:repeating-linear-gradient(90deg,#000 0 1px,transparent 1px 2px);"></div>
<div style="left:37px;top:476px;width:89px;height:1px;background:repeating-linear-gradient(90deg,#000 0 1px,transparent 1px 2px);"></div>
<div style="left:311px;top:476px;width:950px;height:1px;background:repeating-linear-gradient(90deg,#000 0 1px,transparent 1px 2px);"></div>
<div style="left:37px;top:505px;width:89px;height:1px;background:repeating-linear-gradient(90deg,#000 0 1px,transparent 1px 2px);"></div>
<div style="left:311px;top:505px;width:950px;height:1px;background:repeating-linear-gradient(90deg,#000 0 1px,transparent 1px 2px);"></div>
<div style="left:37px;top:534px;width:89px;height:1px;background:repeating-linear-gradient(90deg,#000 0 1px,transparent 1px 2px);"></div>
<div style="left:311px;top:534px;width:950px;height:1px;background:repeating-linear-gradient(90deg,#000 0 1px,transparent 1px 2px);"></div>
<div style="left:37px;top:563px;width:89px;height:1px;background:repeating-linear-gradient(90deg,#000 0 1px,transparent 1px 2px);"></div>
<div style="left:311px;top:563px;width:950px;height:1px;background:repeating-linear-gradient(90deg,#000 0 1px,transparent 1px 2px);"></div>
<div style="left:37px;top:592px;width:89px;height:1px;background:repeating-linear-gradient(90deg,#000 0 1px,transparent 1px 2px);"></div>
<div style="left:311px;top:592px;width:950px;height:1px;background:repeating-linear-gradient(90deg,#000 0 1px,transparent 1px 2px);"></div>
<div style="left:37px;top:621px;width:89px;height:1px;background:repeating-linear-gradient(90deg,#000 0 1px,transparent 1px 2px);"></div>
<div style="left:311px;top:621px;width:950px;height:1px;background:repeating-linear-gradient(90deg,#000 0 1px,transparent 1px 2px);"></div>
<div style="left:37px;top:650px;width:89px;height:1px;background:repeating-linear-gradient(90deg,#000 0 1px,transparent 1px 2px);"></div>
<div style="left:311px;top:650px;width:950px;height:1px;background:repeating-linear-gradient(90deg,#000 0 1px,transparent 1px 2px);"></div>
<div style="left:37px;top:389px;width:1px;height:266px;background:repeating-linear-gradient(180deg,#000 0 1px,transparent 1px 2px);"></div>
<div style="left:66px;top:389px;width:1px;height:266px;background:repeating-linear-gradient(180deg,#000 0 1px,transparent 1px 2px);"></div>
<div style="left:125px;top:389px;width:1px;height:266px;background:repeating-linear-gradient(180deg,#000 0 1px,transparent 1px 2px);"></div>
<div style="left:376px;top:389px;width:1px;height:266px;background:repeating-linear-gradient(180deg,#000 0 1px,transparent 1px 2px);"></div>
<div style="left:441px;top:389px;width:1px;height:266px;background:repeating-linear-gradient(180deg,#000 0 1px,transparent 1px 2px);"></div>
<div style="left:494px;top:389px;width:1px;height:266px;background:repeating-linear-gradient(180deg,#000 0 1px,transparent 1px 2px);"></div>
<div style="left:559px;top:389px;width:1px;height:266px;background:repeating-linear-gradient(180deg,#000 0 1px,transparent 1px 2px);"></div>
<div style="left:613px;top:389px;width:1px;height:266px;background:repeating-linear-gradient(180deg,#000 0 1px,transparent 1px 2px);"></div>
<div style="left:666px;top:389px;width:1px;height:266px;background:repeating-linear-gradient(180deg,#000 0 1px,transparent 1px 2px);"></div>
<div style="left:721px;top:389px;width:1px;height:266px;background:repeating-linear-gradient(180deg,#000 0 1px,transparent 1px 2px);"></div>
<div style="left:775px;top:389px;width:1px;height:266px;background:repeating-linear-gradient(180deg,#000 0 1px,transparent 1px 2px);"></div>
<div style="left:830px;top:389px;width:1px;height:266px;background:repeating-linear-gradient(180deg,#000 0 1px,transparent 1px 2px);"></div>
<div style="left:886px;top:389px;width:1px;height:266px;background:repeating-linear-gradient(180deg,#000 0 1px,transparent 1px 2px);"></div>
<div style="left:941px;top:389px;width:1px;height:266px;background:repeating-linear-gradient(180deg,#000 0 1px,transparent 1px 2px);"></div>
<div style="left:985px;top:389px;width:1px;height:266px;background:repeating-linear-gradient(180deg,#000 0 1px,transparent 1px 2px);"></div>
<div style="left:1027px;top:389px;width:1px;height:266px;background:repeating-linear-gradient(180deg,#000 0 1px,transparent 1px 2px);"></div>
<div style="left:1085px;top:389px;width:1px;height:266px;background:repeating-linear-gradient(180deg,#000 0 1px,transparent 1px 2px);"></div>
<div style="left:1135px;top:389px;width:1px;height:266px;background:repeating-linear-gradient(180deg,#000 0 1px,transparent 1px 2px);"></div>
<div style="left:1233px;top:389px;width:1px;height:266px;background:repeating-linear-gradient(180deg,#000 0 1px,transparent 1px 2px);"></div>
<div style="left:311px;top:389px;width:1px;height:266px;background:repeating-linear-gradient(180deg,#000 0 1px,transparent 1px 2px);"></div>
<div style="left:37px;top:320px;width:1224px;height:2px;background:#111;"></div>
<div style="left:36px;top:320px;width:2px;height:70px;background:#111;"></div>
<div style="left:65px;top:320px;width:2px;height:70px;background:#111;"></div>
<div style="left:124px;top:320px;width:2px;height:70px;background:#111;"></div>
<div style="left:375px;top:320px;width:2px;height:70px;background:#111;"></div>
<div style="left:441px;top:320px;width:1px;height:70px;background:repeating-linear-gradient(180deg,#000 0 1px,transparent 1px 2px);"></div>
<div style="left:441px;top:334px;width:820px;height:2px;background:#111;"></div>
<div style="left:493px;top:320px;width:2px;height:16px;background:#111;"></div>
<div style="left:494px;top:336px;width:1px;height:54px;background:repeating-linear-gradient(180deg,#000 0 1px,transparent 1px 2px);"></div>
<div style="left:558px;top:320px;width:2px;height:16px;background:#111;"></div>
<div style="left:559px;top:336px;width:1px;height:54px;background:repeating-linear-gradient(180deg,#000 0 1px,transparent 1px 2px);"></div>
<div style="left:612px;top:320px;width:2px;height:16px;background:#111;"></div>
<div style="left:613px;top:336px;width:1px;height:54px;background:repeating-linear-gradient(180deg,#000 0 1px,transparent 1px 2px);"></div>
<div style="left:665px;top:320px;width:2px;height:16px;background:#111;"></div>
<div style="left:666px;top:336px;width:1px;height:54px;background:repeating-linear-gradient(180deg,#000 0 1px,transparent 1px 2px);"></div>
<div style="left:720px;top:320px;width:2px;height:16px;background:#111;"></div>
<div style="left:721px;top:336px;width:1px;height:54px;background:repeating-linear-gradient(180deg,#000 0 1px,transparent 1px 2px);"></div>
<div style="left:774px;top:320px;width:2px;height:16px;background:#111;"></div>
<div style="left:775px;top:336px;width:1px;height:54px;background:repeating-linear-gradient(180deg,#000 0 1px,transparent 1px 2px);"></div>
<div style="left:775px;top:350px;width:167px;height:1px;background:repeating-linear-gradient(90deg,#000 0 1px,transparent 1px 2px);"></div>
<div style="left:830px;top:350px;width:1px;height:40px;background:repeating-linear-gradient(180deg,#000 0 1px,transparent 1px 2px);"></div>
<div style="left:886px;top:350px;width:1px;height:40px;background:repeating-linear-gradient(180deg,#000 0 1px,transparent 1px 2px);"></div>
<div style="left:941px;top:336px;width:1px;height:54px;background:repeating-linear-gradient(180deg,#000 0 1px,transparent 1px 2px);"></div>
<div style="left:985px;top:336px;width:1px;height:54px;background:repeating-linear-gradient(180deg,#000 0 1px,transparent 1px 2px);"></div>
<div style="left:1027px;top:336px;width:1px;height:54px;background:repeating-linear-gradient(180deg,#000 0 1px,transparent 1px 2px);"></div>
<div style="left:1085px;top:336px;width:1px;height:54px;background:repeating-linear-gradient(180deg,#000 0 1px,transparent 1px 2px);"></div>
<div style="left:1135px;top:336px;width:1px;height:54px;background:repeating-linear-gradient(180deg,#000 0 1px,transparent 1px 2px);"></div>
<div style="left:1233px;top:336px;width:1px;height:54px;background:repeating-linear-gradient(180deg,#000 0 1px,transparent 1px 2px);"></div>
<div style="left:37px;top:389px;width:1223px;height:1px;background:#8e8a8c;"></div>
<div style="left:311px;top:247px;width:1px;height:407px;background:#8a8a8a;"></div>
<div style="left:0px;top:389px;width:37px;height:1px;background:#8e8e8e;"></div>
<div style="left:37px;top:247px;width:274px;height:75px;overflow:hidden;">
<div class="t " style="left:4px;top:3.92px;font-size:18.4px;line-height:18.4px;color:#000;font-weight:bold;">NOMBRE ALUMNO</div>
<div class="t " style="left:4px;top:29.12px;font-size:18.4px;line-height:18.4px;color:#000;font-weight:bold;">PLANILLA DE SALARIO PAGOS</div>
<div class="t " style="left:4px;top:53.42px;font-size:18.4px;line-height:18.4px;color:#000;font-weight:bold;">Periodo de pago</div>
</div>
<div style="left:312px;top:295px;width:200px;height:25px;overflow:hidden;">
<div class="t " style="left:-200px;top:5.42px;font-size:18.4px;line-height:18.4px;color:#000;font-weight:bold;width:330.5px;text-align:right;">Diciembre de 2022</div>
</div>
<svg style="left:38px;top:248px;" width="6" height="6" viewBox="0 0 6 6"><path d="M0 0 H6 L0 6 Z" fill="#1b6b2c"/></svg>
<svg style="left:38px;top:272px;" width="6" height="6" viewBox="0 0 6 6"><path d="M0 0 H6 L0 6 Z" fill="#1b6b2c"/></svg>
<div class="t g" style="left:38px;top:348.53px;font-size:10.6px;line-height:10.6px;color:#1a0a12;font-weight:bold;width:28px;text-align:center;white-space:nowrap;">No.</div>
<div class="t g" style="left:67px;top:348.53px;font-size:10.6px;line-height:10.6px;color:#1a0a12;font-weight:bold;width:58px;text-align:center;white-space:nowrap;">CODIGO</div>
<div class="t g" style="left:126px;top:348.70px;font-size:10.4px;line-height:10.4px;color:#1a0a12;font-weight:bold;width:185px;text-align:center;white-space:nowrap;">NOMBRE</div>
<div class="t g" style="left:312px;top:348.53px;font-size:10.6px;line-height:10.6px;color:#1a0a12;font-weight:bold;width:64px;text-align:center;white-space:nowrap;">CARGO</div>
<div class="t g" style="left:377px;top:342.03px;font-size:10.6px;line-height:10.6px;color:#1a0a12;font-weight:bold;width:64px;text-align:center;white-space:nowrap;">FECHA DE</div>
<div class="t g" style="left:377px;top:354.53px;font-size:10.6px;line-height:10.6px;color:#1a0a12;font-weight:bold;width:64px;text-align:center;white-space:nowrap;">INGRESO</div>
<div style="left:442px;top:336px;width:52px;height:53px;overflow:hidden;">
<div class="t g" style="left:0px;top:15.78px;font-size:10.3px;line-height:10.3px;color:#111;font-weight:bold;width:52px;text-align:center;white-space:nowrap;">Valor</div>
<div class="t g" style="left:0px;top:28.28px;font-size:10.3px;line-height:10.3px;color:#111;font-weight:bold;width:52px;text-align:center;white-space:nowrap;">hora</div>
<div class="t g" style="left:0px;top:40.78px;font-size:10.3px;line-height:10.3px;color:#111;font-weight:bold;width:52px;text-align:center;white-space:nowrap;">normal</div>
</div>
<div style="left:495px;top:336px;width:64px;height:53px;overflow:hidden;">
<div class="t g" style="left:0px;top:28.28px;font-size:10.3px;line-height:10.3px;color:#111;font-weight:bold;width:64px;text-align:center;white-space:nowrap;">SALARIO</div>
<div class="t g" style="left:0px;top:40.78px;font-size:10.3px;line-height:10.3px;color:#111;font-weight:bold;width:64px;text-align:center;white-space:nowrap;">MENSUAL</div>
</div>
<div style="left:560px;top:336px;width:53px;height:53px;overflow:hidden;">
<div class="t g" style="left:0px;top:15.78px;font-size:10.3px;line-height:10.3px;color:#111;font-weight:bold;width:53px;text-align:center;white-space:nowrap;">Valor h.</div>
<div class="t g" style="left:0px;top:28.28px;font-size:10.3px;line-height:10.3px;color:#111;font-weight:bold;width:53px;text-align:center;white-space:nowrap;">extra</div>
<div class="t g" style="left:0px;top:40.78px;font-size:10.3px;line-height:10.3px;color:#111;font-weight:bold;width:53px;text-align:center;white-space:nowrap;">Diurna</div>
</div>
<div style="left:614px;top:336px;width:52px;height:53px;overflow:hidden;">
<div class="t g" style="left:0px;top:28.28px;font-size:10.3px;line-height:10.3px;color:#111;font-weight:bold;width:52px;text-align:center;white-space:nowrap;">Dia</div>
<div class="t g" style="left:0px;top:40.78px;font-size:10.3px;line-height:10.3px;color:#111;font-weight:bold;width:52px;text-align:center;white-space:nowrap;">Feriado</div>
</div>
<div style="left:667px;top:336px;width:54px;height:53px;overflow:hidden;">
<div class="t g" style="left:0px;top:15.78px;font-size:10.3px;line-height:10.3px;color:#111;font-weight:bold;width:54px;text-align:center;white-space:nowrap;">Valor h.</div>
<div class="t g" style="left:0px;top:28.28px;font-size:10.3px;line-height:10.3px;color:#111;font-weight:bold;width:54px;text-align:center;white-space:nowrap;">extra</div>
<div class="t g" style="left:0px;top:40.78px;font-size:10.3px;line-height:10.3px;color:#111;font-weight:bold;width:54px;text-align:center;white-space:nowrap;">Nocturna</div>
</div>
<div style="left:722px;top:336px;width:53px;height:53px;overflow:hidden;">
<div class="t g" style="left:0px;top:28.28px;font-size:10.3px;line-height:10.3px;color:#111;font-weight:bold;width:53px;text-align:center;white-space:nowrap;">Dias de</div>
<div class="t g" style="left:0px;top:40.78px;font-size:10.3px;line-height:10.3px;color:#111;font-weight:bold;width:53px;text-align:center;white-space:nowrap;">falta</div>
</div>
<div class="t g" style="left:775px;top:322.31px;font-size:11.8px;line-height:11.8px;color:#111;font-weight:bold;width:604px;text-align:center;">DEVENGADO EN LA QUINCENA</div>
<div class="t g" style="left:775px;top:338.11px;font-size:10.5px;line-height:10.5px;color:#111;font-weight:bold;width:166px;text-align:center;">PERIODO DE PAGO</div>
<div class="t g" style="left:781px;top:364.78px;font-size:10.3px;line-height:10.3px;color:#000;white-space:nowrap;">01-dic-22</div>
<div class="t g" style="left:836px;top:364.78px;font-size:10.3px;line-height:10.3px;color:#000;white-space:nowrap;">15-dic-22</div>
<div class="t g" style="left:887px;top:365.04px;font-size:10px;line-height:10px;color:#111;width:54px;text-align:center;white-space:nowrap;">15</div>
<div style="left:942px;top:336px;width:43px;height:53px;overflow:hidden;">
<div class="t g" style="left:0px;top:16.63px;font-size:9.3px;line-height:9.3px;color:#000;width:43px;text-align:center;white-space:nowrap;">No Horas</div>
<div class="t g" style="left:0px;top:29.63px;font-size:9.3px;line-height:9.3px;color:#000;width:43px;text-align:center;white-space:nowrap;">Extra</div>
<div class="t g" style="left:0px;top:42.63px;font-size:9.3px;line-height:9.3px;color:#000;width:43px;text-align:center;white-space:nowrap;">Diurna</div>
</div>
<div style="left:986px;top:336px;width:41px;height:53px;overflow:hidden;">
<div class="t g" style="left:0px;top:3.63px;font-size:9.3px;line-height:9.3px;color:#000;width:41px;text-align:center;white-space:nowrap;">No</div>
<div class="t g" style="left:0px;top:16.63px;font-size:9.3px;line-height:9.3px;color:#000;width:41px;text-align:center;white-space:nowrap;">Horas</div>
<div class="t g" style="left:0px;top:29.63px;font-size:9.3px;line-height:9.3px;color:#000;width:41px;text-align:center;white-space:nowrap;">Extra</div>
<div class="t g" style="left:0px;top:42.63px;font-size:9.3px;line-height:9.3px;color:#000;width:41px;text-align:center;white-space:nowrap;">nocturna</div>
</div>
<div style="left:1028px;top:336px;width:57px;height:53px;overflow:hidden;">
<div class="t g" style="left:0px;top:29.63px;font-size:9.3px;line-height:9.3px;color:#000;width:57px;text-align:center;white-space:nowrap;">SALARIO</div>
<div class="t g" style="left:0px;top:42.63px;font-size:9.3px;line-height:9.3px;color:#000;width:57px;text-align:center;white-space:nowrap;">QUINCENAL</div>
</div>
<div style="left:1086px;top:336px;width:49px;height:53px;overflow:hidden;">
<div class="t g" style="left:0px;top:16.63px;font-size:9.3px;line-height:9.3px;color:#000;width:49px;text-align:center;white-space:nowrap;">Horas</div>
<div class="t g" style="left:0px;top:29.63px;font-size:9.3px;line-height:9.3px;color:#000;width:49px;text-align:center;white-space:nowrap;">extra</div>
<div class="t g" style="left:0px;top:42.63px;font-size:9.3px;line-height:9.3px;color:#000;width:49px;text-align:center;white-space:nowrap;">Diurnas</div>
</div>
<div class="t g" style="left:1139px;top:378.63px;font-size:9.3px;line-height:9.3px;color:#000;">Horas extra nocturnas</div>
<div class="t g" style="left:1240px;top:378.46px;font-size:9.5px;line-height:9.5px;color:#000;font-weight:bold;">com</div>
<div style="left:50px;top:372px;width:15px;height:16px;background:#fbfbfb;border:1px solid #d2d2d2;box-sizing:border-box;"></div>
<svg style="left:54px;top:378px;" width="8" height="5" viewBox="0 0 8 5"><path d="M0.5 0.5 H7.5 L4 4.5 Z" fill="#666"/></svg>
<div style="left:109px;top:372px;width:15px;height:16px;background:#fbfbfb;border:1px solid #d2d2d2;box-sizing:border-box;"></div>
<svg style="left:113px;top:378px;" width="8" height="5" viewBox="0 0 8 5"><path d="M0.5 0.5 H7.5 L4 4.5 Z" fill="#666"/></svg>
<div style="left:295px;top:372px;width:15px;height:16px;background:#fbfbfb;border:1px solid #d2d2d2;box-sizing:border-box;"></div>
<svg style="left:299px;top:378px;" width="8" height="5" viewBox="0 0 8 5"><path d="M0.5 0.5 H7.5 L4 4.5 Z" fill="#666"/></svg>
<div style="left:360px;top:372px;width:15px;height:16px;background:#fbfbfb;border:1px solid #d2d2d2;box-sizing:border-box;"></div>
<svg style="left:364px;top:378px;" width="8" height="5" viewBox="0 0 8 5"><path d="M0.5 0.5 H7.5 L4 4.5 Z" fill="#666"/></svg>
<div style="left:425px;top:372px;width:15px;height:16px;background:#fbfbfb;border:1px solid #d2d2d2;box-sizing:border-box;"></div>
<svg style="left:429px;top:378px;" width="8" height="5" viewBox="0 0 8 5"><path d="M0.5 0.5 H7.5 L4 4.5 Z" fill="#666"/></svg>
<div style="left:478px;top:372px;width:15px;height:16px;background:#fbfbfb;border:1px solid #d2d2d2;box-sizing:border-box;"></div>
<svg style="left:482px;top:378px;" width="8" height="5" viewBox="0 0 8 5"><path d="M0.5 0.5 H7.5 L4 4.5 Z" fill="#666"/></svg>
<div style="left:543px;top:372px;width:15px;height:16px;background:#fbfbfb;border:1px solid #d2d2d2;box-sizing:border-box;"></div>
<svg style="left:547px;top:378px;" width="8" height="5" viewBox="0 0 8 5"><path d="M0.5 0.5 H7.5 L4 4.5 Z" fill="#666"/></svg>
<div style="left:597px;top:372px;width:15px;height:16px;background:#fbfbfb;border:1px solid #d2d2d2;box-sizing:border-box;"></div>
<svg style="left:601px;top:378px;" width="8" height="5" viewBox="0 0 8 5"><path d="M0.5 0.5 H7.5 L4 4.5 Z" fill="#666"/></svg>
<div style="left:650px;top:372px;width:15px;height:16px;background:#fbfbfb;border:1px solid #d2d2d2;box-sizing:border-box;"></div>
<svg style="left:654px;top:378px;" width="8" height="5" viewBox="0 0 8 5"><path d="M0.5 0.5 H7.5 L4 4.5 Z" fill="#666"/></svg>
<div style="left:705px;top:372px;width:15px;height:16px;background:#fbfbfb;border:1px solid #d2d2d2;box-sizing:border-box;"></div>
<svg style="left:709px;top:378px;" width="8" height="5" viewBox="0 0 8 5"><path d="M0.5 0.5 H7.5 L4 4.5 Z" fill="#666"/></svg>
<div style="left:759px;top:372px;width:15px;height:16px;background:#fbfbfb;border:1px solid #d2d2d2;box-sizing:border-box;"></div>
<svg style="left:763px;top:378px;" width="8" height="5" viewBox="0 0 8 5"><path d="M0.5 0.5 H7.5 L4 4.5 Z" fill="#666"/></svg>
<div style="left:814px;top:372px;width:15px;height:16px;background:#fbfbfb;border:1px solid #d2d2d2;box-sizing:border-box;"></div>
<svg style="left:818px;top:378px;" width="8" height="5" viewBox="0 0 8 5"><path d="M0.5 0.5 H7.5 L4 4.5 Z" fill="#666"/></svg>
<div style="left:870px;top:372px;width:15px;height:16px;background:#fbfbfb;border:1px solid #d2d2d2;box-sizing:border-box;"></div>
<svg style="left:874px;top:378px;" width="8" height="5" viewBox="0 0 8 5"><path d="M0.5 0.5 H7.5 L4 4.5 Z" fill="#666"/></svg>
<div style="left:925px;top:372px;width:15px;height:16px;background:#fbfbfb;border:1px solid #d2d2d2;box-sizing:border-box;"></div>
<svg style="left:929px;top:378px;" width="8" height="5" viewBox="0 0 8 5"><path d="M0.5 0.5 H7.5 L4 4.5 Z" fill="#666"/></svg>
<div style="left:969px;top:372px;width:15px;height:16px;background:#fbfbfb;border:1px solid #d2d2d2;box-sizing:border-box;"></div>
<svg style="left:973px;top:378px;" width="8" height="5" viewBox="0 0 8 5"><path d="M0.5 0.5 H7.5 L4 4.5 Z" fill="#666"/></svg>
<div style="left:1011px;top:372px;width:15px;height:16px;background:#fbfbfb;border:1px solid #d2d2d2;box-sizing:border-box;"></div>
<svg style="left:1015px;top:378px;" width="8" height="5" viewBox="0 0 8 5"><path d="M0.5 0.5 H7.5 L4 4.5 Z" fill="#666"/></svg>
<div style="left:1069px;top:372px;width:15px;height:16px;background:#fbfbfb;border:1px solid #d2d2d2;box-sizing:border-box;"></div>
<svg style="left:1073px;top:378px;" width="8" height="5" viewBox="0 0 8 5"><path d="M0.5 0.5 H7.5 L4 4.5 Z" fill="#666"/></svg>
<div style="left:1119px;top:372px;width:15px;height:16px;background:#fbfbfb;border:1px solid #d2d2d2;box-sizing:border-box;"></div>
<svg style="left:1123px;top:378px;" width="8" height="5" viewBox="0 0 8 5"><path d="M0.5 0.5 H7.5 L4 4.5 Z" fill="#666"/></svg>
<div style="left:1217px;top:372px;width:15px;height:16px;background:#fbfbfb;border:1px solid #d2d2d2;box-sizing:border-box;"></div>
<svg style="left:1221px;top:378px;" width="8" height="5" viewBox="0 0 8 5"><path d="M0.5 0.5 H7.5 L4 4.5 Z" fill="#666"/></svg>
<div style="left:24px;top:374px;width:13px;height:14px;background:#f9f9f9;border:1px solid #d0d0d0;box-sizing:border-box;"></div>
<div style="left:28px;top:381px;width:5px;height:1px;background:#666;"></div>
<svg style="left:776px;top:351px;" width="6" height="6" viewBox="0 0 6 6"><path d="M0 0 H6 L0 6 Z" fill="#1b6b2c"/></svg>
<svg style="left:831px;top:351px;" width="6" height="6" viewBox="0 0 6 6"><path d="M0 0 H6 L0 6 Z" fill="#1b6b2c"/></svg>
<div class="t g" style="left:38px;top:398.57px;font-size:11.5px;line-height:11.5px;color:#3f1226;width:28px;text-align:center;white-space:nowrap;">6</div>
<div class="t g" style="left:67px;top:398.57px;font-size:11.5px;line-height:11.5px;color:#3f1226;width:58px;text-align:center;white-space:nowrap;">006</div>
<div class="t g" style="left:127px;top:405.40px;font-size:11.1px;line-height:11.1px;color:#152010;white-space:nowrap;">FAUSTO LOPEZ GOMEZ</div>
<div class="t g" style="left:441px;top:398.73px;font-size:11.3px;line-height:11.3px;color:#1c1c1c;width:50px;text-align:right;white-space:nowrap;">2.50</div>
<div class="t g" style="left:494px;top:398.73px;font-size:11.3px;line-height:11.3px;color:#1c1c1c;width:62px;text-align:right;white-space:nowrap;">600.00</div>
<div class="t g" style="left:559px;top:398.73px;font-size:11.3px;line-height:11.3px;color:#1c1c1c;width:51px;text-align:right;white-space:nowrap;">5.00</div>
<div class="t g" style="left:666px;top:398.73px;font-size:11.3px;line-height:11.3px;color:#1c1c1c;width:52px;text-align:right;white-space:nowrap;">6.25</div>
<div class="t g" style="left:778px;top:398.40px;font-size:11.7px;line-height:11.7px;color:#1c1c1c;white-space:nowrap;">01-dic-22</div>
<div class="t g" style="left:833px;top:398.40px;font-size:11.7px;line-height:11.7px;color:#1c1c1c;white-space:nowrap;">15-dic-22</div>
<div class="t g" style="left:887px;top:400.26px;font-size:9.5px;line-height:9.5px;color:#1c1c1c;width:54px;text-align:center;white-space:nowrap;">15</div>
<div class="t g" style="left:942px;top:398.73px;font-size:11.3px;line-height:11.3px;color:#1c1c1c;width:43px;text-align:center;white-space:nowrap;">12.0</div>
<div class="t g" style="left:986px;top:398.73px;font-size:11.3px;line-height:11.3px;color:#1c1c1c;width:41px;text-align:center;white-space:nowrap;">8.0</div>
<div class="t g" style="left:1027px;top:398.73px;font-size:11.3px;line-height:11.3px;color:#1c1c1c;width:56px;text-align:right;white-space:nowrap;">300.00</div>
<div class="t g" style="left:1085px;top:398.73px;font-size:11.3px;line-height:11.3px;color:#1c1c1c;width:48px;text-align:right;white-space:nowrap;">60.00</div>
<div class="t g" style="left:1135px;top:398.73px;font-size:11.3px;line-height:11.3px;color:#1c1c1c;width:96px;text-align:right;white-space:nowrap;">50.00</div>
<svg style="left:67px;top:390px;" width="6" height="6" viewBox="0 0 6 6"><path d="M0 0 H6 L0 6 Z" fill="#1b6b2c"/></svg>
<svg style="left:776px;top:390px;" width="6" height="6" viewBox="0 0 6 6"><path d="M0 0 H6 L0 6 Z" fill="#1b6b2c"/></svg>
<svg style="left:831px;top:390px;" width="6" height="6" viewBox="0 0 6 6"><path d="M0 0 H6 L0 6 Z" fill="#1b6b2c"/></svg>
<div class="t g" style="left:38px;top:427.57px;font-size:11.5px;line-height:11.5px;color:#3f1226;width:28px;text-align:center;white-space:nowrap;">7</div>
<div class="t g" style="left:67px;top:427.57px;font-size:11.5px;line-height:11.5px;color:#3f1226;width:58px;text-align:center;white-space:nowrap;">007</div>
<div class="t g" style="left:127px;top:434.40px;font-size:11.1px;line-height:11.1px;color:#152010;white-space:nowrap;">MARIO ABARCA SALAZAR</div>
<div class="t g" style="left:441px;top:427.73px;font-size:11.3px;line-height:11.3px;color:#1c1c1c;width:50px;text-align:right;white-space:nowrap;">1.67</div>
<div class="t g" style="left:494px;top:427.73px;font-size:11.3px;line-height:11.3px;color:#1c1c1c;width:62px;text-align:right;white-space:nowrap;">400.00</div>
<div class="t g" style="left:559px;top:427.73px;font-size:11.3px;line-height:11.3px;color:#1c1c1c;width:51px;text-align:right;white-space:nowrap;">3.33</div>
<div class="t g" style="left:666px;top:427.73px;font-size:11.3px;line-height:11.3px;color:#1c1c1c;width:52px;text-align:right;white-space:nowrap;">4.17</div>
<div class="t g" style="left:778px;top:427.40px;font-size:11.7px;line-height:11.7px;color:#1c1c1c;white-space:nowrap;">01-dic-22</div>
<div class="t g" style="left:833px;top:427.40px;font-size:11.7px;line-height:11.7px;color:#1c1c1c;white-space:nowrap;">15-dic-22</div>
<div class="t g" style="left:887px;top:429.26px;font-size:9.5px;line-height:9.5px;color:#1c1c1c;width:54px;text-align:center;white-space:nowrap;">15</div>
<div class="t g" style="left:942px;top:427.73px;font-size:11.3px;line-height:11.3px;color:#1c1c1c;width:43px;text-align:center;white-space:nowrap;">19.0</div>
<div class="t g" style="left:986px;top:427.73px;font-size:11.3px;line-height:11.3px;color:#1c1c1c;width:41px;text-align:center;white-space:nowrap;">14.0</div>
<div class="t g" style="left:1027px;top:427.73px;font-size:11.3px;line-height:11.3px;color:#1c1c1c;width:56px;text-align:right;white-space:nowrap;">200.00</div>
<div class="t g" style="left:1085px;top:427.73px;font-size:11.3px;line-height:11.3px;color:#1c1c1c;width:48px;text-align:right;white-space:nowrap;">63.33</div>
<div class="t g" style="left:1135px;top:427.73px;font-size:11.3px;line-height:11.3px;color:#1c1c1c;width:96px;text-align:right;white-space:nowrap;">58.33</div>
<svg style="left:67px;top:419px;" width="6" height="6" viewBox="0 0 6 6"><path d="M0 0 H6 L0 6 Z" fill="#1b6b2c"/></svg>
<svg style="left:776px;top:419px;" width="6" height="6" viewBox="0 0 6 6"><path d="M0 0 H6 L0 6 Z" fill="#1b6b2c"/></svg>
<svg style="left:831px;top:419px;" width="6" height="6" viewBox="0 0 6 6"><path d="M0 0 H6 L0 6 Z" fill="#1b6b2c"/></svg>
<div class="t g" style="left:38px;top:456.57px;font-size:11.5px;line-height:11.5px;color:#3f1226;width:28px;text-align:center;white-space:nowrap;">8</div>
<div class="t g" style="left:67px;top:456.57px;font-size:11.5px;line-height:11.5px;color:#3f1226;width:58px;text-align:center;white-space:nowrap;">008</div>
<div class="t g" style="left:127px;top:463.40px;font-size:11.1px;line-height:11.1px;color:#152010;white-space:nowrap;">OTTO MOLINA CRUZ</div>
<div class="t g" style="left:441px;top:456.73px;font-size:11.3px;line-height:11.3px;color:#1c1c1c;width:50px;text-align:right;white-space:nowrap;">1.88</div>
<div class="t g" style="left:494px;top:456.73px;font-size:11.3px;line-height:11.3px;color:#1c1c1c;width:62px;text-align:right;white-space:nowrap;">450.00</div>
<div class="t g" style="left:559px;top:456.73px;font-size:11.3px;line-height:11.3px;color:#1c1c1c;width:51px;text-align:right;white-space:nowrap;">3.75</div>
<div class="t g" style="left:666px;top:456.73px;font-size:11.3px;line-height:11.3px;color:#1c1c1c;width:52px;text-align:right;white-space:nowrap;">4.69</div>
<div class="t g" style="left:778px;top:456.40px;font-size:11.7px;line-height:11.7px;color:#1c1c1c;white-space:nowrap;">01-dic-22</div>
<div class="t g" style="left:833px;top:456.40px;font-size:11.7px;line-height:11.7px;color:#1c1c1c;white-space:nowrap;">15-dic-22</div>
<div class="t g" style="left:887px;top:458.26px;font-size:9.5px;line-height:9.5px;color:#1c1c1c;width:54px;text-align:center;white-space:nowrap;">15</div>
<div class="t g" style="left:1027px;top:456.73px;font-size:11.3px;line-height:11.3px;color:#1c1c1c;width:56px;text-align:right;white-space:nowrap;">225.00</div>
<div class="t g" style="left:1085px;top:456.73px;font-size:11.3px;line-height:11.3px;color:#1c1c1c;width:48px;text-align:right;white-space:nowrap;">0.00</div>
<div class="t g" style="left:1135px;top:456.73px;font-size:11.3px;line-height:11.3px;color:#1c1c1c;width:96px;text-align:right;white-space:nowrap;">0.00</div>
<svg style="left:67px;top:448px;" width="6" height="6" viewBox="0 0 6 6"><path d="M0 0 H6 L0 6 Z" fill="#1b6b2c"/></svg>
<svg style="left:776px;top:448px;" width="6" height="6" viewBox="0 0 6 6"><path d="M0 0 H6 L0 6 Z" fill="#1b6b2c"/></svg>
<svg style="left:831px;top:448px;" width="6" height="6" viewBox="0 0 6 6"><path d="M0 0 H6 L0 6 Z" fill="#1b6b2c"/></svg>
<div class="t g" style="left:38px;top:543.57px;font-size:11.5px;line-height:11.5px;color:#3f1226;width:28px;text-align:center;white-space:nowrap;">9</div>
<div class="t g" style="left:67px;top:543.57px;font-size:11.5px;line-height:11.5px;color:#3f1226;width:58px;text-align:center;white-space:nowrap;">009</div>
<div class="t g" style="left:127px;top:550.40px;font-size:11.1px;line-height:11.1px;color:#152010;white-space:nowrap;">JAIME PEREZ RUIZ</div>
<div class="t g" style="left:441px;top:543.73px;font-size:11.3px;line-height:11.3px;color:#1c1c1c;width:50px;text-align:right;white-space:nowrap;">7.50</div>
<div class="t g" style="left:494px;top:543.73px;font-size:11.3px;line-height:11.3px;color:#1c1c1c;width:62px;text-align:right;white-space:nowrap;">1,800.00</div>
<div class="t g" style="left:559px;top:543.73px;font-size:11.3px;line-height:11.3px;color:#1c1c1c;width:51px;text-align:right;white-space:nowrap;">15.00</div>
<div class="t g" style="left:666px;top:543.73px;font-size:11.3px;line-height:11.3px;color:#1c1c1c;width:52px;text-align:right;white-space:nowrap;">18.75</div>
<div class="t g" style="left:778px;top:543.40px;font-size:11.7px;line-height:11.7px;color:#1c1c1c;white-space:nowrap;">01-dic-22</div>
<div class="t g" style="left:833px;top:543.40px;font-size:11.7px;line-height:11.7px;color:#1c1c1c;white-space:nowrap;">15-dic-22</div>
<div class="t g" style="left:887px;top:545.26px;font-size:9.5px;line-height:9.5px;color:#1c1c1c;width:54px;text-align:center;white-space:nowrap;">15</div>
<div class="t g" style="left:1027px;top:543.73px;font-size:11.3px;line-height:11.3px;color:#1c1c1c;width:56px;text-align:right;white-space:nowrap;">900.00</div>
<div class="t g" style="left:1085px;top:543.73px;font-size:11.3px;line-height:11.3px;color:#1c1c1c;width:48px;text-align:right;white-space:nowrap;">0.00</div>
<div class="t g" style="left:1135px;top:543.73px;font-size:11.3px;line-height:11.3px;color:#1c1c1c;width:96px;text-align:right;white-space:nowrap;">0.00</div>
<svg style="left:67px;top:535px;" width="6" height="6" viewBox="0 0 6 6"><path d="M0 0 H6 L0 6 Z" fill="#1b6b2c"/></svg>
<svg style="left:776px;top:535px;" width="6" height="6" viewBox="0 0 6 6"><path d="M0 0 H6 L0 6 Z" fill="#1b6b2c"/></svg>
<svg style="left:831px;top:535px;" width="6" height="6" viewBox="0 0 6 6"><path d="M0 0 H6 L0 6 Z" fill="#1b6b2c"/></svg>
<div class="t g" style="left:38px;top:572.57px;font-size:11.5px;line-height:11.5px;color:#3f1226;width:28px;text-align:center;white-space:nowrap;">10</div>
<div class="t g" style="left:67px;top:572.57px;font-size:11.5px;line-height:11.5px;color:#3f1226;width:58px;text-align:center;white-space:nowrap;">010</div>
<div class="t g" style="left:127px;top:579.40px;font-size:11.1px;line-height:11.1px;color:#152010;white-space:nowrap;">EDUARDO SANCHEZ TORRES</div>
<div class="t g" style="left:441px;top:572.73px;font-size:11.3px;line-height:11.3px;color:#1c1c1c;width:50px;text-align:right;white-space:nowrap;">3.75</div>
<div class="t g" style="left:494px;top:572.73px;font-size:11.3px;line-height:11.3px;color:#1c1c1c;width:62px;text-align:right;white-space:nowrap;">900.00</div>
<div class="t g" style="left:559px;top:572.73px;font-size:11.3px;line-height:11.3px;color:#1c1c1c;width:51px;text-align:right;white-space:nowrap;">7.50</div>
<div class="t g" style="left:666px;top:572.73px;font-size:11.3px;line-height:11.3px;color:#1c1c1c;width:52px;text-align:right;white-space:nowrap;">9.38</div>
<div class="t g" style="left:778px;top:572.40px;font-size:11.7px;line-height:11.7px;color:#1c1c1c;white-space:nowrap;">01-dic-22</div>
<div class="t g" style="left:833px;top:572.40px;font-size:11.7px;line-height:11.7px;color:#1c1c1c;white-space:nowrap;">15-dic-22</div>
<div class="t g" style="left:887px;top:574.26px;font-size:9.5px;line-height:9.5px;color:#1c1c1c;width:54px;text-align:center;white-space:nowrap;">15</div>
<div class="t g" style="left:1027px;top:572.73px;font-size:11.3px;line-height:11.3px;color:#1c1c1c;width:56px;text-align:right;white-space:nowrap;">450.00</div>
<div class="t g" style="left:1085px;top:572.73px;font-size:11.3px;line-height:11.3px;color:#1c1c1c;width:48px;text-align:right;white-space:nowrap;">0.00</div>
<div class="t g" style="left:1135px;top:572.73px;font-size:11.3px;line-height:11.3px;color:#1c1c1c;width:96px;text-align:right;white-space:nowrap;">0.00</div>
<svg style="left:67px;top:564px;" width="6" height="6" viewBox="0 0 6 6"><path d="M0 0 H6 L0 6 Z" fill="#1b6b2c"/></svg>
<svg style="left:776px;top:564px;" width="6" height="6" viewBox="0 0 6 6"><path d="M0 0 H6 L0 6 Z" fill="#1b6b2c"/></svg>
<svg style="left:831px;top:564px;" width="6" height="6" viewBox="0 0 6 6"><path d="M0 0 H6 L0 6 Z" fill="#1b6b2c"/></svg>
<div class="t g" style="left:38px;top:601.57px;font-size:11.5px;line-height:11.5px;color:#3f1226;width:28px;text-align:center;white-space:nowrap;">11</div>
<div class="t g" style="left:67px;top:601.57px;font-size:11.5px;line-height:11.5px;color:#3f1226;width:58px;text-align:center;white-space:nowrap;">011</div>
<div class="t g" style="left:127px;top:608.40px;font-size:11.1px;line-height:11.1px;color:#152010;white-space:nowrap;">SONIA PERLA DE SERRANO</div>
<div class="t g" style="left:441px;top:601.73px;font-size:11.3px;line-height:11.3px;color:#1c1c1c;width:50px;text-align:right;white-space:nowrap;">1.88</div>
<div class="t g" style="left:494px;top:601.73px;font-size:11.3px;line-height:11.3px;color:#1c1c1c;width:62px;text-align:right;white-space:nowrap;">450.00</div>
<div class="t g" style="left:559px;top:601.73px;font-size:11.3px;line-height:11.3px;color:#1c1c1c;width:51px;text-align:right;white-space:nowrap;">3.75</div>
<div class="t g" style="left:666px;top:601.73px;font-size:11.3px;line-height:11.3px;color:#1c1c1c;width:52px;text-align:right;white-space:nowrap;">4.69</div>
<div class="t g" style="left:778px;top:601.40px;font-size:11.7px;line-height:11.7px;color:#1c1c1c;white-space:nowrap;">01-dic-22</div>
<div class="t g" style="left:833px;top:601.40px;font-size:11.7px;line-height:11.7px;color:#1c1c1c;white-space:nowrap;">15-dic-22</div>
<div class="t g" style="left:887px;top:603.26px;font-size:9.5px;line-height:9.5px;color:#1c1c1c;width:54px;text-align:center;white-space:nowrap;">15</div>
<div class="t g" style="left:1027px;top:601.73px;font-size:11.3px;line-height:11.3px;color:#1c1c1c;width:56px;text-align:right;white-space:nowrap;">225.00</div>
<div class="t g" style="left:1085px;top:601.73px;font-size:11.3px;line-height:11.3px;color:#1c1c1c;width:48px;text-align:right;white-space:nowrap;">0.00</div>
<div class="t g" style="left:1135px;top:601.73px;font-size:11.3px;line-height:11.3px;color:#1c1c1c;width:96px;text-align:right;white-space:nowrap;">0.00</div>
<svg style="left:67px;top:593px;" width="6" height="6" viewBox="0 0 6 6"><path d="M0 0 H6 L0 6 Z" fill="#1b6b2c"/></svg>
<svg style="left:776px;top:593px;" width="6" height="6" viewBox="0 0 6 6"><path d="M0 0 H6 L0 6 Z" fill="#1b6b2c"/></svg>
<svg style="left:831px;top:593px;" width="6" height="6" viewBox="0 0 6 6"><path d="M0 0 H6 L0 6 Z" fill="#1b6b2c"/></svg>
<div class="t g" style="left:38px;top:630.57px;font-size:11.5px;line-height:11.5px;color:#3f1226;width:28px;text-align:center;white-space:nowrap;">12</div>
<div class="t g" style="left:67px;top:630.57px;font-size:11.5px;line-height:11.5px;color:#3f1226;width:58px;text-align:center;white-space:nowrap;">012</div>
<div class="t g" style="left:127px;top:637.40px;font-size:11.1px;line-height:11.1px;color:#152010;white-space:nowrap;">TOMAS PARADA LUNA</div>
<div class="t g" style="left:441px;top:630.73px;font-size:11.3px;line-height:11.3px;color:#1c1c1c;width:50px;text-align:right;white-space:nowrap;">1.67</div>
<div class="t g" style="left:494px;top:630.73px;font-size:11.3px;line-height:11.3px;color:#1c1c1c;width:62px;text-align:right;white-space:nowrap;">400.00</div>
<div class="t g" style="left:559px;top:630.73px;font-size:11.3px;line-height:11.3px;color:#1c1c1c;width:51px;text-align:right;white-space:nowrap;">3.33</div>
<div class="t g" style="left:666px;top:630.73px;font-size:11.3px;line-height:11.3px;color:#1c1c1c;width:52px;text-align:right;white-space:nowrap;">4.17</div>
<div class="t g" style="left:778px;top:630.40px;font-size:11.7px;line-height:11.7px;color:#1c1c1c;white-space:nowrap;">01-dic-22</div>
<div class="t g" style="left:833px;top:630.40px;font-size:11.7px;line-height:11.7px;color:#1c1c1c;white-space:nowrap;">15-dic-22</div>
<div class="t g" style="left:887px;top:632.26px;font-size:9.5px;line-height:9.5px;color:#1c1c1c;width:54px;text-align:center;white-space:nowrap;">15</div>
<div class="t g" style="left:1027px;top:630.73px;font-size:11.3px;line-height:11.3px;color:#1c1c1c;width:56px;text-align:right;white-space:nowrap;">200.00</div>
<div class="t g" style="left:1085px;top:630.73px;font-size:11.3px;line-height:11.3px;color:#1c1c1c;width:48px;text-align:right;white-space:nowrap;">0.00</div>
<div class="t g" style="left:1135px;top:630.73px;font-size:11.3px;line-height:11.3px;color:#1c1c1c;width:96px;text-align:right;white-space:nowrap;">0.00</div>
<svg style="left:67px;top:622px;" width="6" height="6" viewBox="0 0 6 6"><path d="M0 0 H6 L0 6 Z" fill="#1b6b2c"/></svg>
<svg style="left:776px;top:622px;" width="6" height="6" viewBox="0 0 6 6"><path d="M0 0 H6 L0 6 Z" fill="#1b6b2c"/></svg>
<svg style="left:831px;top:622px;" width="6" height="6" viewBox="0 0 6 6"><path d="M0 0 H6 L0 6 Z" fill="#1b6b2c"/></svg>
<div class="t g" style="left:127px;top:492.20px;font-size:11.1px;line-height:11.1px;color:#152010;white-space:nowrap;">SUB TOTAL ADMINISTRACION</div>
<div class="t g" style="left:126px;top:521.03px;font-size:10.6px;line-height:10.6px;color:#2a0d10;font-weight:bold;width:185px;text-align:center;white-space:nowrap;">DEPTO VENTAS</div>
<div class="t g" style="left:494px;top:485.13px;font-size:11.3px;line-height:11.3px;color:#1c1c1c;width:62px;text-align:right;white-space:nowrap;">7,400.00</div>
<svg style="left:495px;top:477px;" width="6" height="6" viewBox="0 0 6 6"><path d="M0 0 H6 L0 6 Z" fill="#1b6b2c"/></svg>
<div class="t g" style="left:942px;top:492.43px;font-size:11.3px;line-height:11.3px;color:#111;font-weight:bold;width:43px;text-align:center;white-space:nowrap;">68.0</div>
<div class="t g" style="left:986px;top:492.43px;font-size:11.3px;line-height:11.3px;color:#111;font-weight:bold;width:41px;text-align:center;white-space:nowrap;">44.0</div>
<div class="t g" style="left:1028px;top:492.43px;font-size:11.3px;line-height:11.3px;color:#111;font-weight:bold;width:57px;text-align:center;white-space:nowrap;">3700.0</div>
<div class="t g" style="left:1086px;top:492.43px;font-size:11.3px;line-height:11.3px;color:#111;font-weight:bold;width:49px;text-align:center;white-space:nowrap;">296.3</div>
<div class="t g" style="left:1136px;top:492.43px;font-size:11.3px;line-height:11.3px;color:#111;font-weight:bold;width:97px;text-align:center;white-space:nowrap;">238.5</div>
<div style="left:1234px;top:480px;width:26px;height:25px;overflow:hidden;">
<div class="t g" style="left:22px;top:12.43px;font-size:11.3px;line-height:11.3px;color:#111;font-weight:bold;">0</div>
</div>
<svg style="left:495px;top:650px;" width="5" height="5" viewBox="0 0 5 5"><path d="M0 0 H5 L0 5 Z" fill="#1b6b2c"/></svg>
<svg style="left:522px;top:476px;" width="16" height="15" viewBox="0 0 16 15"><path d="M5 1 H10 V5 H14 V10 H10 V14 H5 V10 H1 V5 H5 Z" fill="#fff" stroke="#000" stroke-width="1.6"/></svg>
<div style="left:1260px;top:227px;width:20px;height:427px;background:#efeef1;"></div>
<div style="left:1260px;top:247px;width:1px;height:407px;background:#c6c6c6;"></div>
<svg style="left:1264px;top:234px;" width="12" height="10" viewBox="0 0 12 10"><path d="M1 8 L6 2 L11 8 Z" fill="#666"/></svg>
<div style="left:1266px;top:319px;width:8px;height:189px;background:#6b6b6b;border-radius:4px;"></div>
<svg style="left:1264px;top:642px;" width="12" height="10" viewBox="0 0 12 10"><path d="M1 2 L6 8 L11 2 Z" fill="#666"/></svg>
<div style="left:0px;top:654px;width:1280px;height:26px;background:#f3f3f3;"></div>
<div style="left:0px;top:654px;width:1280px;height:1px;background:#dcdcdc;"></div>
<svg style="left:22px;top:661px;" width="8" height="10" viewBox="0 0 8 10"><path d="M6.5 1 L1.5 5 L6.5 9 Z" fill="#1e5a3a"/></svg>
<svg style="left:50px;top:661px;" width="8" height="10" viewBox="0 0 8 10"><path d="M1.5 1 L6.5 5 L1.5 9 Z" fill="#bbb"/></svg>
<div class="t " style="left:75px;top:660.84px;font-size:12px;line-height:12px;color:#222;font-weight:bold;">...</div>
<div style="left:94px;top:660px;width:1px;height:19px;background:#cfcfcf;"></div>
<div class="t " style="left:107.5px;top:661.60px;font-size:11.1px;line-height:11.1px;color:#333;">PLANILLA1Q</div>
<div style="left:190px;top:654px;width:100px;height:23px;background:#ffffff;border-left:1px solid #d6d6d6;border-right:1px solid #d6d6d6;"></div>
<div style="left:190px;top:675px;width:100px;height:2px;background:#1e6e43;"></div>
<div class="t " style="left:201px;top:661.18px;font-size:11.6px;line-height:11.6px;color:#175c36;font-weight:bold;-webkit-text-stroke:0.2px #175c36;">PLANILLA2Q</div>
<div class="t " style="left:302.5px;top:660.59px;font-size:12.3px;line-height:12.3px;color:#333;">Aporte Patronal</div>
<div style="left:402px;top:660px;width:1px;height:19px;background:#cfcfcf;"></div>
<svg style="left:432px;top:658px;" width="18" height="18" viewBox="0 0 18 18"><circle cx="9" cy="9" r="7" fill="none" stroke="#555" stroke-width="1.1"/><path d="M9 5 V13 M5 9 H13" stroke="#555" stroke-width="1.1"/></svg>
<div style="left:1120px;top:662px;width:2px;height:2px;background:#999;"></div>
<div style="left:1120px;top:666px;width:2px;height:2px;background:#999;"></div>
<div style="left:1120px;top:670px;width:2px;height:2px;background:#999;"></div>
<svg style="left:1138px;top:661px;" width="8" height="10" viewBox="0 0 8 10"><path d="M6.5 1 L1.5 5 L6.5 9 Z" fill="#666"/></svg>
<div style="left:1156px;top:662px;width:41px;height:9px;background:#6b6b6b;border-radius:4.5px;"></div>
<svg style="left:1248px;top:661px;" width="8" height="10" viewBox="0 0 8 10"><path d="M1.5 1 L6.5 5 L1.5 9 Z" fill="#666"/></svg>
<div style="left:0px;top:680px;width:1280px;height:20px;background:#f3f2f4;"></div>
<div class="t " style="left:7.5px;top:685.11px;font-size:10.5px;line-height:10.5px;color:#333;">Listo</div>
<svg style="left:72px;top:683px;" width="16" height="16" viewBox="0 0 16 16"><circle cx="6.5" cy="2.8" r="1.6" fill="none" stroke="#222" stroke-width="1"/><path d="M1.5 4.5 C3 6, 5 6.5, 6.5 6.3 C8 6.5, 10 6, 11.5 4.5" fill="none" stroke="#222" stroke-width="1.1"/><path d="M5 6.5 L5 10 L3 14.5 M8 6.5 L7.5 10" fill="none" stroke="#222" stroke-width="1.1"/><path d="M8.5 10.5 L13.5 15 M13.5 10.5 L8.5 15" stroke="#222" stroke-width="1.1"/></svg>
<div class="t " style="left:90px;top:684.94px;font-size:10.7px;line-height:10.7px;color:#333;">Accesibilidad: es necesario investigar</div>
<div style="left:1008px;top:681px;width:33px;height:18px;background:#dedede;"></div>
<svg style="left:1016px;top:683px;" width="15" height="15" viewBox="0 0 15 15"><rect x="1.5" y="1.5" width="12" height="12" fill="none" stroke="#333" stroke-width="1.1"/><path d="M1.5 5.5 H13.5 M1.5 9.5 H13.5 M5.5 1.5 V13.5 M9.5 1.5 V13.5" stroke="#333" stroke-width="1"/></svg>
<svg style="left:1053px;top:683px;" width="16" height="15" viewBox="0 0 16 15"><rect x="1.5" y="1.5" width="13" height="12" fill="none" stroke="#333" stroke-width="1.1"/><rect x="4" y="3.5" width="8" height="8" fill="none" stroke="#333" stroke-width="1"/><path d="M5.5 6 H10.5 M5.5 8 H10.5" stroke="#333" stroke-width=".8"/></svg>
<svg style="left:1090px;top:683px;" width="16" height="15" viewBox="0 0 16 15"><rect x="1.5" y="1.5" width="13" height="12" fill="none" stroke="#333" stroke-width="1.1"/><path d="M5 1.5 V8 H11 V1.5" fill="none" stroke="#333" stroke-width="1"/></svg>
<div style="left:1121px;top:690px;width:9px;height:1px;background:#444;"></div>
<div style="left:1135px;top:690px;width:93px;height:1px;background:#888;"></div>
<div style="left:1178px;top:684px;width:5px;height:12px;background:#555;border-radius:1px;"></div>
<div style="left:1232px;top:690px;width:9px;height:1px;background:#444;"></div>
<div style="left:1236px;top:686px;width:1px;height:9px;background:#444;"></div>
<div class="t " style="left:1252px;top:685.03px;font-size:10.6px;line-height:10.6px;color:#333;">96%</div>
</body></html>
